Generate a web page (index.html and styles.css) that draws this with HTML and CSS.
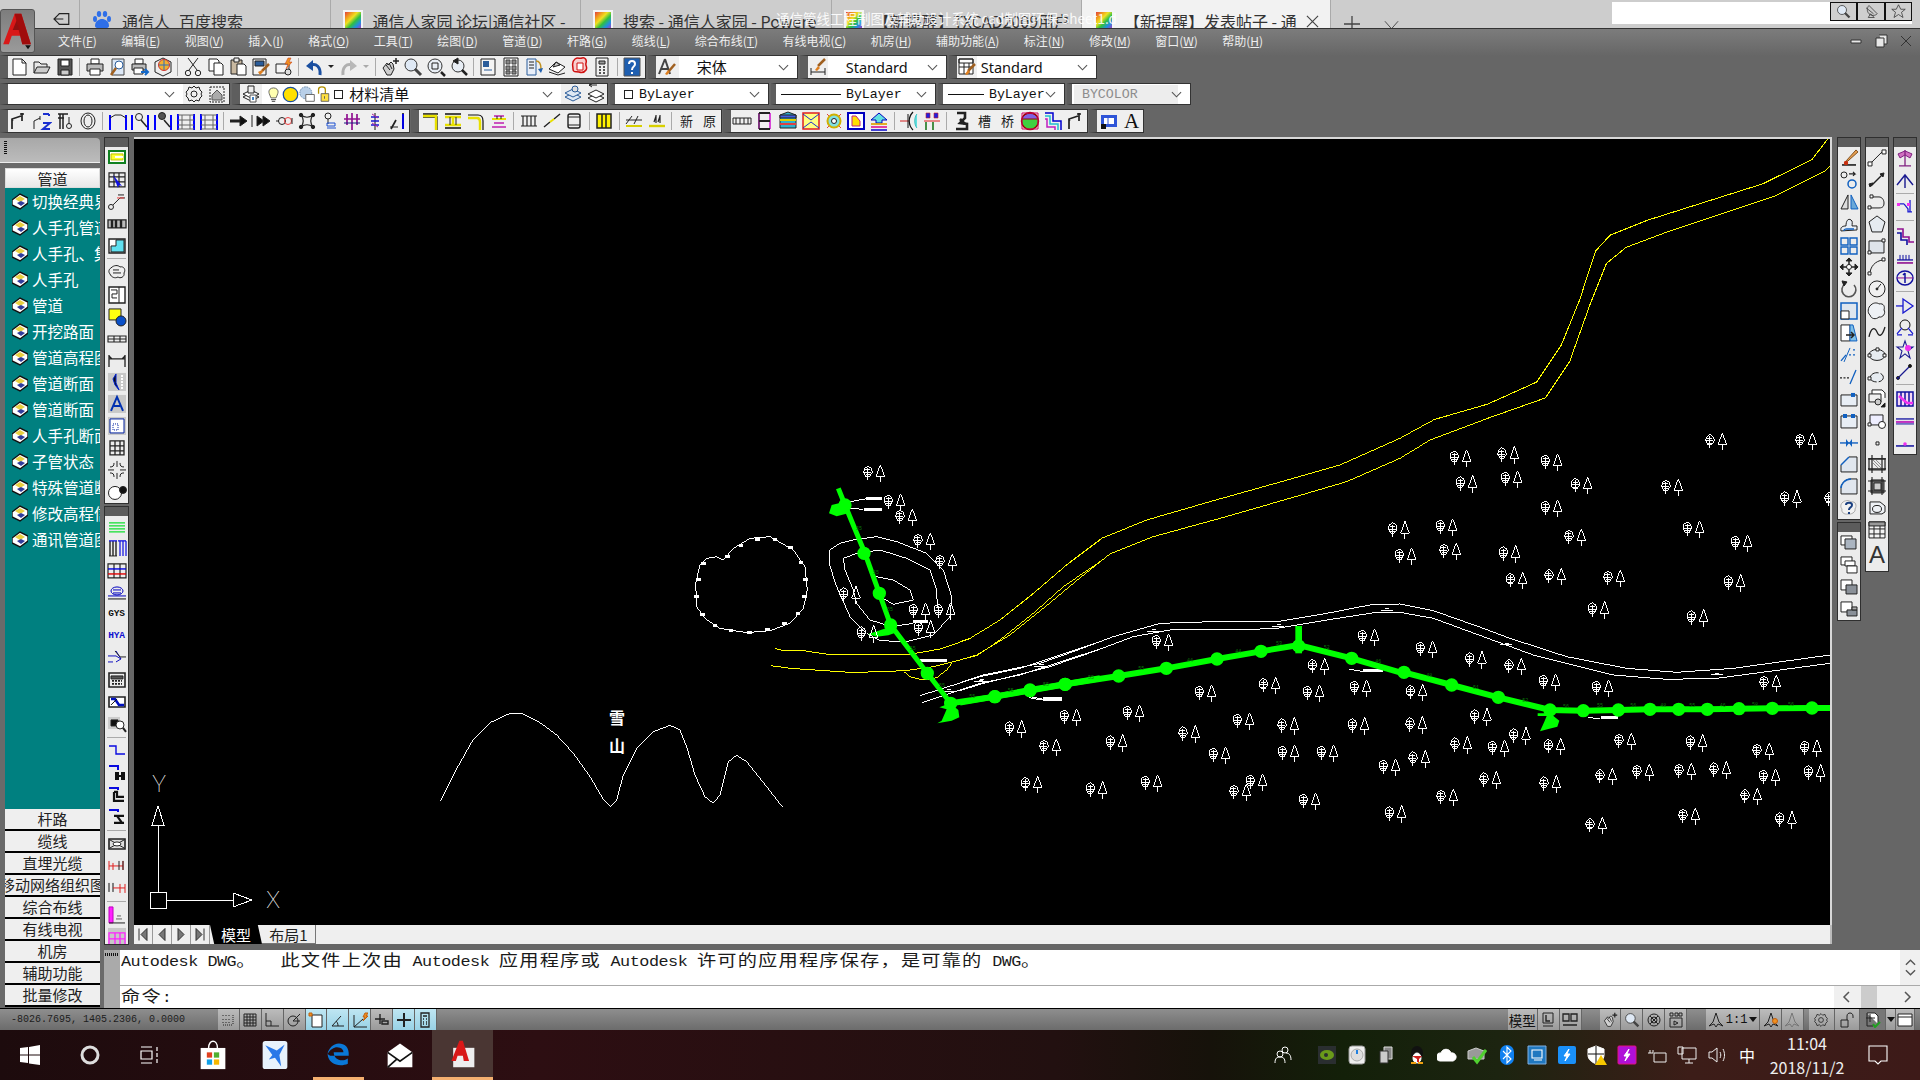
FILE: index.html
```html
<!DOCTYPE html>
<html lang="zh-CN">
<head>
<meta charset="utf-8">
<title>通信管线工程制图及辅助设计系统</title>
<link rel="stylesheet" href="styles.css">
</head>
<body>
<svg class="defs" aria-hidden="true">
<defs>
<g id="new"><path d="M4 2h9l4 4v12H4z" fill="#fff"/><path d="M13 2v4h4"/></g>
<g id="open"><path d="M2 16V5h5l2 2h6v3" fill="#e8e8e8"/><path d="M2 16l3-6h13l-3 6z" fill="#ccc"/></g>
<g id="save"><path d="M3 2h14v16H3z" fill="#555"/><path d="M6 3h8v6H6z" fill="#fff"/><path d="M6 13h8v5H6z" fill="#ccc"/></g>
<g id="print"><path d="M6 2h8v5H6z" fill="#fff"/><path d="M2 7h16v7H2z" fill="#bbb"/><path d="M5 12h10v6H5z" fill="#fff"/></g>
<g id="prev"><path d="M4 2h12v16H4z" fill="#dde8f6" stroke="#444"/><circle cx="11" cy="8" r="4" fill="#fff" stroke="#2a5c9a"/><path d="M8 11l-5 7" stroke="#a06020" stroke-width="2.5"/></g>
<g id="plot"><path d="M5 2h8v5H5z" fill="#fff"/><path d="M2 7h14v6H2z" fill="#bbb"/><path d="M4 11h9v6H4z" fill="#fff"/><path d="M11 15h6M15 12l3 3-3 3" stroke="#1468c8" stroke-width="2"/></g>
<g id="pub"><path d="M10 1l8 4v10l-8 4-8-4V5z" fill="#eee"/><circle cx="11" cy="8" r="5.5" fill="#f2b030" stroke="#c33"/><path d="M11 3v10M6 8h10" stroke="#2a6fc0"/></g>
<g id="cut"><path d="M5 1l9 12M15 1L6 13"/><circle cx="5" cy="16" r="2.7"/><circle cx="15" cy="16" r="2.7"/></g>
<g id="copy"><path d="M3 2h8l2 2v10H3z" fill="#fff"/><path d="M8 6h7l2 2v10H8z" fill="#fff"/></g>
<g id="paste"><path d="M3 3h11v14H3z" fill="#c8b8a0"/><path d="M6 1h5v4H6z" fill="#eee"/><path d="M9 7h7l2 2v9H9z" fill="#fff"/></g>
<g id="match"><path d="M2 2h13v16H2z" fill="#f4f4f4"/><path d="M4 4h9v5H4z" fill="#2a5c9a"/><path d="M18 7l-7 7" stroke="#a06020" stroke-width="2.5"/><path d="M7 15l4-2 1 2-3 3z" fill="#e08020" stroke="none"/></g>
<g id="quick"><path d="M2 7h13v9H2z" fill="#f4f4f4"/><circle cx="14" cy="15" r="3" fill="#ddd"/><path d="M14 1l-3 6h3l-2 5 6-7h-3l2-4z" fill="#f09020" stroke="#c03010" stroke-width=".5"/></g>
<g id="undo"><path d="M16 18C17 10 12 6 7 8" stroke="#1a4fa0" stroke-width="3"/><path d="M2 9l7-6v11z" fill="#1a4fa0" stroke="none"/></g>
<g id="redo"><path d="M4 18C3 10 8 6 13 8" stroke="#b0b0b0" stroke-width="3"/><path d="M18 9l-7-6v11z" fill="#b8b8b8" stroke="none"/></g>
<g id="dd"><path d="M2 8h6l-3 3z" fill="#222" stroke="none"/></g>
<g id="ddg"><path d="M2 8h6l-3 3z" fill="#aaa" stroke="none"/></g>
<g id="pan"><path d="M3 11l4-5 1 2 3-3 2 2 1 5-3 6H7z" fill="#cfcfcf"/><path d="M6 8l4 5M9 6l3 6"/><path d="M16 1v6M13 4h6" stroke-width="1.5"/></g>
<g id="zoom"><circle cx="8" cy="8" r="6" fill="#dfe9f5" stroke="#333"/><path d="M12 12l6 6" stroke-width="3" stroke="#444"/></g>
<g id="zoomw"><circle cx="9" cy="9" r="7" fill="#e8eef5" stroke="#333"/><path d="M6 6h6v6H6z"/><path d="M15 15l4 4" stroke-width="2.5"/></g>
<g id="zoomp"><circle cx="9" cy="9" r="6" fill="#e8eef5" stroke="#333"/><path d="M13 13l5 5" stroke-width="2.5"/><path d="M4 4l5-3v6z" fill="#222"/></g>
<g id="prop"><path d="M3 2h14v16H3z" fill="#f4f4f4"/><path d="M5 4h6v6H5z" fill="#2a5c9a" stroke="none"/><path d="M6 13h8" stroke="#2a5c9a"/></g>
<g id="dc"><path d="M3 1h14v18H3z" fill="#f4f4f4"/><path d="M5 3h4v4H5zM11 3h4v4h-4zM5 9h4v4H5zM11 9h4v4h-4zM5 14h4v3H5zM11 14h4v3h-4z" fill="#888" stroke="#444"/></g>
<g id="tp"><path d="M3 2h9v16H3z" fill="#e8eef8" stroke="#2a5c9a"/><path d="M5 5h5M5 8h5M5 11h5"/><path d="M12 4c4 0 5 4 5 8" stroke="#c09020" stroke-width="1.5"/><path d="M14 12l3 4 2-5z" fill="#2060b0" stroke="none"/></g>
<g id="mark"><path d="M2 12l7-7 9 5-7 6z" fill="#fff"/><path d="M2 15l9 3 7-2"/><path d="M6 10l3-5 4 3z" fill="#ccc"/></g>
<g id="sheet"><path d="M5 2c3-2 4 0 7-1s5 2 4 5 2 4 0 7-4 3-7 2-6 1-6-3-2-7 2-10z" fill="#f8d0d0" stroke="#d01010" stroke-width="1.5"/><path d="M7 6h6v7H7z" fill="#fff" stroke="#d01010"/></g>
<g id="calc"><path d="M4 1h12v18H4z" fill="#f0f0f0"/><path d="M7 4h6v3H7z" fill="#999"/><path d="M7 10h2M11 10h2M7 13h2M11 13h2M7 16h2M11 16h2" stroke-width="1.5"/></g>
<g id="help"><path d="M2 1h16v18H2z" fill="#1f5fb0" stroke="#555"/><path d="M7 7c0-4 6-4 6 0 0 3-3 2-3 6" stroke="#fff" stroke-width="2"/><path d="M10 15v2" stroke="#fff" stroke-width="2"/></g>
<g id="txs"><path d="M8 2L2 17M8 2l5 15M4 12h7" stroke="#444" stroke-width="2"/><path d="M18 7l-6 7" stroke="#a06020" stroke-width="2.5"/><path d="M8 17l3-4 2 2-3 3z" fill="#e08020" stroke="none"/></g>
<g id="dims"><path d="M3 11v7M17 11v7M3 15h14"/><path d="M17 2l-7 7" stroke="#a06020" stroke-width="2.5"/><path d="M7 13l3-4 2 2-3 3z" fill="#e08020" stroke="none"/></g>
<g id="tabs"><path d="M2 2h14v15H2z" fill="#fff"/><path d="M2 2h14v4H2zM2 10h14M7 6v11M12 6v11"/><path d="M18 7l-7 7" stroke="#a06020" stroke-width="2.5"/><path d="M8 17l3-4 2 2-3 3z" fill="#e08020" stroke="none"/></g>
<g id="gear"><circle cx="10" cy="10" r="3"/><path d="M10 2l2 2 3-1 1 3 2 2-1 2 1 2-2 2-1 3-3-1-2 2-2-2-3 1-1-3-2-2 1-2-1-2 2-2 1-3 3 1z"/></g>
<g id="gear2"><path d="M3 3h14v15H3z" stroke-dasharray="2 1"/><path d="M5 11l5-5 5 5v5H5z" fill="#aaa" stroke="#555"/></g>
<g id="lay"><path d="M2 13l8-4 8 4-8 4z" fill="#fff"/><path d="M2 10l8-4 8 4-8 4z" fill="#fff"/><path d="M7 2h6v7H7z" fill="#eee"/><path d="M9 11h6v7H9z" fill="#fff" stroke="#555"/><path d="M11 13h2v3h-2z" fill="#4080c0" stroke="none"/></g>
<g id="lay2"><path d="M2 13l8-4 8 4-8 4z" fill="#dfe9f5" stroke="#2a5c9a"/><path d="M2 9l8-4 8 4-8 4z" fill="#dfe9f5" stroke="#2a5c9a"/><circle cx="12" cy="5" r="3" fill="#ddd" stroke="#2a5c9a"/></g>
<g id="lay3"><path d="M2 14l8-4 8 4-8 4z" fill="#fff"/><path d="M2 10l8-4 8 4-8 4z" fill="#fff"/><path d="M3 1h8M3 1l3 2M3 1l3-1" stroke="#222"/></g>
<g id="bulb"><path d="M5 9c-3-9 13-9 10 0l-2 5H7z" fill="#ffffb0" stroke="#555"/><path d="M7 16h6M8 18h4"/></g>
<g id="sun"><circle cx="10" cy="10" r="8.500" fill="#ffe000" stroke="#1a4fa0" stroke-width="1.5"/></g>
<g id="frz"><circle cx="8" cy="8" r="7" fill="#b8cfe8" stroke="#6080a0" stroke-dasharray="2 1"/><path d="M8 10h10v8H8z" fill="#fff" stroke="#555"/></g>
<g id="lock"><path d="M3 9V4c0-4 8-4 8 0v5" stroke="#b09000" stroke-width="1.5"/><path d="M6 9h9v9H6z" fill="#ffe040" stroke="#555"/><path d="M10 12v3" stroke="#555"/></g>
<g id="p1"><path d="M3 18V8l9-3M13 2v8M11 3h4" stroke-width="1.7"/><path d="M3 8l1 2" /></g>
<g id="p2"><path d="M2 18V10l6-3M8 5v4"/><path d="M11 3h6M17 3v2M11 12h7l-7 6h7" stroke="#1a2fd0" stroke-width="2"/></g>
<g id="p3"><path d="M3 3h10M5 3v15M8 3v15M3 7h6" stroke-width="1.5"/><circle cx="14" cy="15" r="2.5"/><path d="M14 6v7"/></g>
<g id="p4"><ellipse cx="10" cy="10" rx="7" ry="8"/><ellipse cx="10" cy="10" rx="4" ry="6"/></g>
<g id="q1"><path d="M2 4v15M18 4v15" stroke="#0000ff" stroke-width="2"/><path d="M2 7l5-3h6l5 3"/></g>
<g id="q2"><path d="M2 4v15M18 4v15" stroke="#0000ff" stroke-width="2"/><circle cx="9" cy="6" r="3.5"/><path d="M11 9l6 7" stroke-width="1.5"/></g>
<g id="q3"><path d="M2 4v15M18 4v15" stroke="#0000ff" stroke-width="2"/><circle cx="9" cy="5" r="3.5" fill="#555"/><path d="M11 9l6 7" stroke-width="1.5"/></g>
<g id="q4"><path d="M2 3v16M18 3v16" stroke="#0000ff" stroke-width="2"/><path d="M2 4h16M2 9h16M2 14h16M2 18h16M6 4v14M14 4v14" stroke="#666"/></g>
<g id="a1"><path d="M2 10h12" stroke-width="3"/><path d="M12 5l7 5-7 5z" fill="#111"/></g>
<g id="a2"><path d="M1 4v12M6 5l7 5-7 5zM12 5l7 5-7 5z" fill="#111" stroke-width="1"/></g>
<g id="a3"><path d="M2 10h3"/><circle cx="8" cy="10" r="3.5"/><circle cx="14" cy="10" r="3.5" stroke="#f04040"/><path d="M18 7v6"/></g>
<g id="a4"><path d="M4 4c4 3 8 3 12 0M4 16c4-3 8-3 12 0M4 4c3 4 3 8 0 12M16 4c-3 4-3 8 0 12" stroke-width="1.2"/><circle cx="4" cy="4" r="1.7" fill="#222"/><circle cx="16" cy="4" r="1.7" fill="#222"/><circle cx="4" cy="16" r="1.7" fill="#222"/><circle cx="16" cy="16" r="1.7" fill="#222"/></g>
<g id="a5"><circle cx="8" cy="5" r="3"/><path d="M8 8v5" /><path d="M7 12h8v3H7zM7 17h9" stroke="#1a4fd0"/></g>
<g id="a6"><path d="M10 2v17M5 3v11M15 3v11M2 8h16" stroke="#901090" stroke-width="1.7"/><path d="M2 12h16" stroke="#1a1a80"/></g>
<g id="a7"><path d="M10 2v17" stroke="#111"/><path d="M6 6h8M6 10h8M6 14h8" stroke="#1a1ad0" stroke-width="1.5"/><path d="M7 3l6 4M7 12l6 4" stroke="#b020a0"/></g>
<g id="a8"><path d="M3 18L8 9M15 2v8M15 8v10" stroke-width="1.7"/><path d="M15 3v15" stroke="#0000e0" stroke-width="2"/><path d="M2 16h8"/></g>
<g id="y1"><path d="M2 6h14v13M2 3h15" stroke="#111" stroke-width="1.3"/><path d="M2 5h13v14" stroke="#e8e000" stroke-width="2.4"/></g>
<g id="y2"><path d="M2 3h16M2 17h16" stroke="#111" stroke-width="1.3"/><path d="M2 6h16M2 14h16M10 6v8" stroke="#e8e000" stroke-width="2.4"/><path d="M7 6v8M13 6v8"/></g>
<g id="y3"><path d="M2 4h10c5 0 5 4 5 6v9" stroke="#111" stroke-width="1.2"/><path d="M2 7h9c3 0 3 2 3 4v8" stroke="#e8e000" stroke-width="2.4"/></g>
<g id="y4"><path d="M5 5h10M5 12h10M3 16h14" stroke="#c020b0" stroke-width="1.5"/><path d="M3 8h14" stroke="#e8e000" stroke-width="2"/><path d="M8 5v3M12 5v3"/></g>
<g id="w1"><path d="M2 5h16M2 15h16M4 5v10M8 5v10M12 5v10M16 5v10" stroke-width="1.2"/></g>
<g id="w2"><path d="M2 16l6-5M12 8l6-5" stroke-width="1.4"/><path d="M8 11l4-3" stroke="#e8e000" stroke-width="2"/></g>
<g id="w3"><rect x="4" y="3" width="12" height="14" rx="2" stroke-width="1.4"/><path d="M4 6h12M4 14h12"/></g>
<g id="w4"><path d="M3 3h14v14H3z" fill="#fff200" stroke-width="1.5"/><path d="M8 3v14M12 3v14" stroke-width="1.5"/></g>
<g id="w5"><path d="M2 13l6-8M2 9h16M14 5l-4 8" stroke="#222"/><path d="M2 15h16" stroke="#d8d000" stroke-width="2"/></g>
<g id="w6"><path d="M2 15h16" stroke="#d8d000" stroke-width="2.4"/><path d="M9 4v8M13 4v8M7 11l2-6M11 11l2-6" stroke-width="1.2"/></g>
<g id="c1"><path d="M1 7h18v6H1z"/><path d="M4 7v6M8 7v6M12 7v6M16 7v6" /></g>
<g id="c2"><path d="M4 2v16M15 2v16" stroke="#d010d0" stroke-width="1.5"/><path d="M4 2h11M4 10h11M4 18h11" stroke-width="1.8"/><path d="M4 2v16"/></g>
<g id="c3"><path d="M2 4l8-3 8 3v13H2z" fill="#30b0d0"/><path d="M2 4h16v3H2z" fill="#4060e0"/><path d="M2 9h16" stroke="#e0d000" stroke-width="2"/><path d="M2 13h16" stroke="#e04040" stroke-width="2"/></g>
<g id="c4"><path d="M2 2h16v16H2z" fill="#ffff80" stroke="#e02020" stroke-width="1.5"/><path d="M2 3l8 6 8-6M2 17l8-6 8 6" stroke="#2030d0"/></g>
<g id="c5"><path d="M3 3l14 14M17 3L3 17" stroke="#e04040"/><circle cx="10" cy="10" r="6.5" fill="#80e0e0" stroke="#d0b000" stroke-width="2"/><circle cx="10" cy="10" r="2.5" fill="#fff"/></g>
<g id="c6"><path d="M2 2h16v16H2z" fill="#fff" stroke="#0000c0" stroke-width="2"/><path d="M6 5h4l4 5v5H6z" fill="#ffe000" stroke="#c02080"/></g>
<g id="c7"><path d="M2 9l8-7 8 7h-5v3H7V9z" fill="#60e0e0" stroke="#0000c0"/><path d="M2 13h16" stroke="#e0a000" stroke-width="1.7"/><path d="M2 16h16" stroke="#e02090" stroke-width="1.7"/><path d="M2 19h16" stroke="#2020d0" stroke-width="1.7"/></g>
<g id="c8"><path d="M1 10h9" stroke="#d02020"/><path d="M14 1C9 6 9 14 14 19" stroke="#111" stroke-width="1.2"/><path d="M18 3C15 6 15 14 18 17" fill="#60e0e0" stroke="#40c0c0"/><path d="M9 3v14" stroke="#111"/></g>
<g id="c9"><path d="M2 10h16" stroke="#e02020"/><path d="M4 11v8M11 11v8" stroke="#107010" stroke-width="1.5"/><path d="M4 2h4v5H4zM12 2h4v5h-4z" fill="#2020e0" stroke="#d02020" stroke-width=".6"/></g>
<g id="d1"><path d="M5 2h8v5l-5 5 7 1v5H4" stroke-width="2.6"/><path d="M8 8l5 5" stroke-width="2.6"/></g>
<g id="d2"><ellipse cx="10" cy="10" rx="8.5" ry="8.5" fill="#40d040" stroke="#a00000" stroke-width="1.5"/><path d="M2 8a8.5 8.5 0 0 1 16 0z" fill="#8060e0" stroke="#a00000"/><path d="M2 2h16v16H2z" stroke="#d00060"/></g>
<g id="d3"><path d="M2 2h8v8h8v9" stroke="#0000d0" stroke-width="1.5"/><path d="M2 5h5v8h8v6" stroke="#20c0d0" stroke-width="1.5"/><path d="M2 8h2v8h8v3" stroke="#c020c0" stroke-width="1.5"/></g>
<g id="d4"><path d="M2 4h16v12H2z" fill="#2f55d8" stroke="none"/><path d="M5 7h10v6H5z" fill="#fff" stroke="none"/><path d="M9 7v6" stroke="#2f55d8"/><path d="M2 13h5v5H2z" fill="#111" stroke="none"/></g>
<g id="bk"><path d="M0 8l8-6 8 4v5l-8 6-8-4z" fill="#fff" stroke="#111" stroke-width="1.4"/><path d="M3 7l5-3 5 3-5 3z" fill="#e8d040" stroke="none"/><path d="M5 11l4-2 4 2-4 3z" fill="#303c9c" stroke="none"/></g>
<g id="v1"><path d="M2 3h16v12H2z" fill="#fff" stroke="#108020" stroke-width="2"/><path d="M4 6h12v6H4z" fill="#ffff30" stroke="#c0c000"/><path d="M8 9h8" stroke="#fff" stroke-width="2"/></g>
<g id="v2"><path d="M2 3h16v14H2zM2 7h16M2 12h16M7 3v14M12 3v14" stroke-width="1.2"/><path d="M6 5l9 11-3-1-1 3z" fill="#1010e0" stroke="none"/></g>
<g id="v3"><circle cx="4" cy="15" r="2.5"/><path d="M6 13l7-7h5" /><path d="M10 6h7" stroke="#f04040"/><path d="M11 3h6"/></g>
<g id="v4"><path d="M1 6h18v8H1z" fill="#bbb" stroke-width="1.3"/><path d="M5 6v8M9 6v8M14 6v8" stroke-width="2.4"/></g>
<g id="v5"><path d="M2 3h16v14H2z" fill="#fff" stroke-width="1.4"/><path d="M9 4h8v12H4v-6h5z" fill="#60e0f0"/></g>
<g id="v6"><path d="M4 5c3-3 7-3 9-1 4-1 6 3 4 6 1 4-4 6-6 4-3 2-7 0-8-3-2-2-1-5 1-6z" fill="#eee"/><path d="M6 7h6M6 10h8"/></g>
<g id="v7"><path d="M2 2h16v16H2z" fill="#fff" stroke-width="1.4"/><path d="M12 2v16M4 5h6v4H5v4h5" /></g>
<g id="v8"><path d="M2 2h12v11H2z" fill="#ffff10"/><circle cx="14" cy="14" r="5" fill="#0a50c8"/></g>
<g id="v9"><path d="M1 7h18v6H1zM7 7v6M13 7v6M1 10h18" stroke-width="1.1"/></g>
<g id="v10"><path d="M2 4v12M18 4v12M2 8h16M2 5l3 3M18 5l-3 3" stroke-width="1.3"/></g>
<g id="v11"><path d="M1 1h18v18H1z" fill="#c8c8c8" stroke="none"/><path d="M9 2v9l3 7-4-5-2-6z" fill="#111" stroke="#0020d0"/><path d="M15 3v14" stroke="#fff" stroke-dasharray="2 1" stroke-width="2"/></g>
<g id="v12"><path d="M1 1h18v18H1z" fill="#c8c8c8" stroke="none"/><path d="M4 17l6-14 6 14M7 12h6" stroke="#0030b0" stroke-width="2"/></g>
<g id="v13"><path d="M1 1h18v18H1z" fill="#c8c8c8" stroke="none"/><path d="M3 3h14v14H3z" fill="#fff" stroke="#0020a0"/><path d="M6 8h5v6H6z" stroke="#0020a0" stroke-dasharray="1 1"/></g>
<g id="v14"><path d="M3 3h14v14H3zM3 8h14M3 13h14M8 3v14M13 3v14" stroke-width="1.3"/></g>
<g id="v15"><path d="M10 1v6M10 13v6M1 10h6M13 10h6M7 3c0 3-1 4-4 4M13 3c0 3 1 4 4 4M7 17c0-3-1-4-4-4M13 17c0-3 1-4 4-4"/></g>
<g id="v16"><circle cx="8" cy="11" r="6.5" fill="#fff"/><circle cx="16" cy="8" r="3.5" fill="#111"/></g>
<g id="u1"><path d="M2 6h16M2 9h16M2 12h16M2 15h16" stroke="#10e030" stroke-width="1.3"/></g>
<g id="u2"><path d="M3 2v15M6 2v15M9 2v15" stroke="#111" stroke-width="1.3"/><path d="M2 2h8M11 2h8M13 2v15M16 2v15M19 2v15" stroke="#0a0ae0" stroke-width="1.2"/><path d="M2 17h8"/></g>
<g id="u3"><path d="M1 3h18v14H1zM7 3v14M13 3v14" stroke-width="1.2"/><path d="M1 8h18" stroke="#0000e0" stroke-width="1.4"/><path d="M1 13h18" stroke="#e00000" stroke-width="1.4"/></g>
<g id="u4"><ellipse cx="10" cy="9" rx="6" ry="4" stroke="#0000c0"/><path d="M6 8h8M6 11h8M1 14h18" stroke="#0000c0"/><path d="M1 17h18" stroke="#111"/></g>
<g id="u7"><path d="M1 8h8l5 3-5 3M9 3l5 8M1 14h5" stroke="#1010c0"/><path d="M8 3l5 6h6"/></g>
<g id="u8"><path d="M2 3h16v14H2z" stroke-width="1.6"/><path d="M4 6h12v3H4z" fill="#555"/><path d="M5 11h10M5 14h10" stroke-dasharray="2 1" stroke-width="1.7"/></g>
<g id="u9"><path d="M2 5h16v10H2z" fill="#fff" stroke-width="1.6"/><path d="M4 7h4l4 6h5" stroke="#0010c0" stroke-width="2.6"/><path d="M4 13l6-6" stroke="#111"/></g>
<g id="u10"><path d="M1 3h12v12H1z" fill="#ccc" stroke="none"/><path d="M4 6h7v6H4z" fill="#111"/><circle cx="13" cy="11" r="4" fill="#fff"/><path d="M16 14l3 4" stroke-width="2"/></g>
<g id="u11"><path d="M2 5h7v8h9" stroke="#0a0ae0" stroke-width="1.4"/></g>
<g id="u12"><path d="M2 3h9v4" stroke="#0a0ae0" stroke-width="2"/><path d="M9 10h2v6H9zM15 10h2v6h-2zM9 13h8" stroke="#111" stroke-width="2"/></g>
<g id="u13"><path d="M2 3h9v2" stroke="#0a0ae0" stroke-width="2"/><path d="M7 7v9h10M7 7h3v5h7" stroke="#111" stroke-width="2.2"/></g>
<g id="u14"><path d="M2 3h9v2" stroke="#0a0ae0" stroke-width="2"/><path d="M7 9h10M7 16h10M10 9l5 7" stroke="#111" stroke-width="2.2"/></g>
<g id="u15"><path d="M2 5h16v10H2z" fill="#ddd" stroke-width="1.6"/><path d="M3 6l14 8M17 6L3 14"/><ellipse cx="10" cy="10" rx="4" ry="2" fill="#fff"/></g>
<g id="u16"><path d="M2 5v9M6 7v7M16 5v9M2 10h14" stroke="#e02020"/><path d="M12 5v9M16 5v9"/></g>
<g id="u17"><path d="M2 5v9M6 5v9" stroke="#111"/><path d="M6 10h12M13 6v9M18 6v9" stroke="#e02020"/></g>
<g id="u18"><path d="M2 2h4v16H2z" fill="#ff20ff" stroke="#c000c0"/><path d="M2 18h16"/><path d="M9 14h6M10 11h4" stroke="#666"/></g>
<g id="u19"><path d="M1 1h18v18H1z" fill="#c8c8c8" stroke="none"/><path d="M2 6h16v12H2zM2 12h16M8 6v12M13 6v12" stroke="#ff20ff" stroke-width="1.3"/></g>
<g id="rA1"><path d="M3 17h14" stroke="#111" stroke-width="1.5"/><path d="M17 2L8 12l-1 2 2-1 10-9z" fill="#e8a050" stroke="#805020"/><circle cx="7" cy="15" r="2.2" fill="#c83010" stroke="none"/></g>
<g id="rA2"><circle cx="5" cy="5" r="3"/><circle cx="13" cy="14" r="4" stroke="#1060c0" stroke-width="1.5"/><path d="M10 4h6l-2-2M16 4l-2 2" stroke-width="1.2"/></g>
<g id="rA3"><path d="M9 3L2 17h7z" fill="#ddd"/><path d="M12 3l7 14h-7z" fill="#6aa8d8" stroke="#1060c0"/></g>
<g id="rA4"><path d="M2 17c-1-4 2-5 5-5 0-5 2-8 5-6 2 1 1 4 1 6h5v4z" fill="#e8eef5"/><path d="M5 17c0-2 1-2 3-2h7" stroke="#1060c0" stroke-width="1.4"/></g>
<g id="rA5"><path d="M2 2h7v7H2zM11 2h7v7h-7zM2 11h7v7H2zM11 11h7v7h-7z" stroke="#1060c0" stroke-width="1.4"/></g>
<g id="rA6"><path d="M10 1v18M1 10h18" stroke-width="1.5"/><path d="M7 4l3-3 3 3zM7 16l3 3 3-3zM4 7l-3 3 3 3zM16 7l3 3-3 3z" fill="#222"/><circle cx="10" cy="10" r="2.5" fill="#fff"/></g>
<g id="rA7"><path d="M15 6a7 7 0 1 1-9-1" stroke="#555" stroke-width="1.6"/><path d="M3 2l5 1-3 4z" fill="#222"/></g>
<g id="rA8"><path d="M2 2h16v16H2z" fill="#dfe6ee" stroke="#1060c0" stroke-width="1.5"/><path d="M2 10h8v8H2z" fill="#fff" stroke="#222"/></g>
<g id="rA9"><path d="M2 2h9v16H2z" fill="#fff"/><path d="M11 2h3l4 16h-7z" fill="#80c0e8" stroke="#1060c0"/><path d="M7 12h8M12 9l3 3-3 3" stroke-width="1.5"/></g>
<g id="rA10"><path d="M2 16l5-6" stroke="#1060c0" stroke-width="1.3"/><path d="M10 10h8M14 5h4" stroke="#1060c0" stroke-dasharray="2 2" stroke-width="1.3"/><path d="M11 3l-6 14" stroke="#1060c0"/></g>
<g id="rA11"><path d="M1 11h9" stroke="#222" stroke-dasharray="2 1.5" stroke-width="1.3"/><path d="M17 3l-6 14" stroke="#1060c0" stroke-width="1.3"/></g>
<g id="rA12"><path d="M2 6h16v11H2z" fill="#e8eef5"/><path d="M12 4h4v4h-4z" fill="#1060c0" stroke="none"/></g>
<g id="rA13"><path d="M2 5h16v12H2z" fill="#e8eef5"/><path d="M4 3h4v4H4zM12 3h4v4h-4z" fill="#1060c0" stroke="none"/></g>
<g id="rA14"><path d="M1 10h18" stroke="#1060c0" stroke-width="1.4"/><path d="M7 6l3 4-3 4zM13 6l-3 4 3 4z" fill="#1060c0" stroke="none"/></g>
<g id="rA15"><path d="M2 18V11L10 3h8v15z" fill="#e0e6ee"/><path d="M2 11L10 3" stroke="#1060c0" stroke-width="1.5"/></g>
<g id="rA16"><path d="M2 18v-6C2 8 6 3 12 3h6v15z" fill="#e0e6ee"/><path d="M2 12C2 8 6 3 12 3" stroke="#1060c0" stroke-width="1.5"/></g>
<g id="rA17"><path d="M3 5c3-3 7-3 9-1 5-1 6 4 4 7 1 3-4 6-7 5-4 1-7-2-6-5-2-2-1-5 0-6z" fill="#f2f2f2" stroke="#aaa"/><path d="M7 7c0-3 6-3 6 0 0 3-3 2-3 5" stroke="#1a3f80" stroke-width="2"/><path d="M10 14v2" stroke="#1a3f80" stroke-width="2"/></g>
<g id="st1"><path d="M2 3h11v9H2z" fill="#fff"/><path d="M6 6h11v10H6z" fill="#aab4c0"/></g>
<g id="st2"><path d="M2 2h11v8H2z" fill="#fff"/><path d="M6 6h10v5H6z" fill="#fff"/><path d="M8 11h10v7H8z" fill="#fff"/></g>
<g id="st3"><path d="M2 3h11v10H2z" fill="#fff"/><path d="M7 8h11v9H7z" fill="#8a9098"/></g>
<g id="st4"><path d="M2 3h11v10H2z" fill="#fff"/><path d="M8 11h10v6H8z" fill="#8a9098"/><path d="M13 8h5v3h-5z" fill="#aaa"/></g>
<g id="b1"><path d="M3 16L16 3"/><path d="M1 14h4v4H1zM15 2h4v4h-4z" fill="#fff" stroke="#222"/></g>
<g id="b2"><path d="M4 16L16 4" stroke-width="1.4"/><path d="M2 14l4-1-3 4zM17 3l-1 4-3-3z" fill="#222"/></g>
<g id="b3"><path d="M3 16h9c4 0 5-2 5-5s-2-6-5-6H5"/><path d="M1 14h3v3H1zM3 3h3v3H3z" fill="#fff"/></g>
<g id="b4"><path d="M10 2l8 6-3 10H5L2 8z" fill="#e6ebf0"/></g>
<g id="b5"><path d="M2 5h15v12H2z" fill="#dfe4ea"/><path d="M1 15h3v3H1zM15 3h3v3h-3z" fill="#fff"/></g>
<g id="b6"><path d="M3 17c0-7 5-13 13-14"/><path d="M1 15h3v3H1zM15 1h3v3h-3z" fill="#fff"/></g>
<g id="b7"><circle cx="10" cy="10" r="8" fill="#f0f0f0"/><path d="M10 10l4-5"/><circle cx="10" cy="10" r="1" fill="#222"/></g>
<g id="b8"><path d="M4 4c3-3 7-2 8-1 5-1 6 3 5 6 2 3-1 8-5 7-3 3-8 2-9-2-3-2-2-8 1-10z" fill="#eef1f5"/></g>
<g id="b9"><path d="M2 14c2-10 6-10 8-5s5 5 8-5" stroke-width="1.3"/></g>
<g id="b10"><ellipse cx="10" cy="10" rx="8" ry="5.5" fill="#e6ebf0"/><path d="M1 9h3v3H1zM16 9h3v3h-3zM9 3h3v3H9z" fill="#fff"/></g>
<g id="b11"><path d="M3 12c0-5 5-7 9-6s5 4 4 6c-2 4-10 4-13 0z" fill="#e6ebf0" stroke-dasharray="12 2"/><path d="M1 10h3v3H1z" fill="#fff"/></g>
<g id="b12"><path d="M5 7V1h10l3 3v5" fill="#fff"/><path d="M2 5h12v8H2z" fill="#eee"/><circle cx="11" cy="13" r="3" fill="#ccc"/><path d="M14 18l4-4v4z" fill="#111"/></g>
<g id="b13"><path d="M3 4h13v10H3z" fill="#eef"/><circle cx="15" cy="14" r="3.5" fill="#fff"/><path d="M1 12h3v3H1z" fill="#fff"/></g>
<g id="b14"><path d="M9 9h3v3H9z"/></g>
<g id="b15"><path d="M2 5h16v11H2z" stroke-width="1.2"/><path d="M5 1v18M15 1v18M1 5h18M1 15h18" stroke-width="1.2"/><path d="M6 6l8 8M9 6l5 5M6 9l5 5" stroke="#888"/></g>
<g id="b16"><path d="M4 4h13v13H4z" fill="#777"/><path d="M7 7h7v7H7z" fill="#ccc"/><path d="M1 5h18M1 15h18M5 1v18M15 1v18" stroke-width="1.1"/></g>
<g id="b17"><path d="M3 4h10l5 4v6l-3 2H3z" fill="#eef1f5"/><ellipse cx="10" cy="11" rx="4.5" ry="3.5"/></g>
<g id="b18"><path d="M2 2h16v16H2z" fill="#f4f4f4"/><path d="M2 2h16v4H2z" fill="#999"/><path d="M2 9h16M2 14h16M7 6v12M13 6v12"/></g>
<g id="c_1"><path d="M10 3L3 6l2 4 5-3 5 3 2-4z" fill="#d070c0" stroke="#802080"/><path d="M10 2v16M4 18h12" stroke="#802080" stroke-width="1.3"/></g>
<g id="c_2"><path d="M2 15L10 5l8 10M10 5v13" stroke="#1a1a90" stroke-width="1.4"/></g>
<g id="c_3"><path d="M3 7h6M9 7l4 5v3h4M15 3v12" stroke="#1a1ad0" stroke-width="1.3"/><path d="M2 6h3v3H2zM12 6h3v3h-3z" fill="#f030f0" stroke="none"/></g>
<g id="c_4"><path d="M2 4h6v8h6v5h5" stroke="#901090" stroke-width="1.6"/><path d="M2 8h4v7h6v5" stroke="#1010a0" stroke-width="1.6"/></g>
<g id="c_5"><path d="M2 13h16" stroke="#1010a0" stroke-width="1.3"/><path d="M2 16h16" stroke="#901090" stroke-width="1.6"/><path d="M5 8v5M8 8v5M11 8v5M14 8v5" stroke="#1010a0"/></g>
<g id="c_6"><ellipse cx="10" cy="10" rx="8" ry="7" stroke="#1010a0" stroke-width="1.4"/><path d="M2 10h16" stroke="#901090"/><path d="M10 5v10M8 7l2-2" stroke="#1010a0" stroke-width="1.5"/></g>
<g id="c_7"><path d="M1 10h7" stroke="#1a1ad0" stroke-width="1.3"/><path d="M8 3l10 7-10 7z" stroke="#1a1ad0" stroke-width="1.3"/></g>
<g id="c_8"><circle cx="10" cy="7" r="5" stroke="#111"/><path d="M2 16l5-6M18 16l-5-6M2 17h5M13 17h5" stroke="#1a1ad0" stroke-width="1.3"/></g>
<g id="c_9"><path d="M10 1l2 6h6l-5 4 2 7-5-4-5 4 2-7-5-4h6z" stroke="#1a1a90" stroke-width="1.1"/><circle cx="13" cy="8" r="3" fill="#f030f0" stroke="none"/></g>
<g id="c_10"><path d="M3 16L15 4" stroke="#1a1a90" stroke-width="1.3"/><circle cx="15" cy="4" r="1.5" fill="#111"/><circle cx="3" cy="16" r="1.5" fill="#1010a0"/></g>
<g id="c_11"><path d="M2 3h16v14H2z" fill="#f4d8f4" stroke="#1010a0" stroke-width="1.5"/><path d="M6 3v14M10 3v14M14 3v14" stroke="#1010a0" stroke-width="1.5"/><path d="M4 7l8 7h6" stroke="#f030f0" stroke-width="2.5"/></g>
<g id="c_12"><path d="M1 8h18" stroke="#1010a0" stroke-width="1.3"/><path d="M1 11h18" stroke="#c030c0" stroke-width="2"/><path d="M1 13h18" stroke="#1010a0"/></g>
<g id="c_13"><path d="M1 13h18" stroke="#1010a0" stroke-width="1.5"/><circle cx="10" cy="11" r="1.8" fill="#f030f0" stroke="none"/></g>
<g id="chev"><path d="M1 1l5 5 5-5" fill="none" stroke="#555" stroke-width="1.2"/></g>
<g id="tr"><path d="M0-20l10 7 3 12-8 13H-6L-13-1l3-12z"/><path d="M0-14V22M-8-8H7M-11 0H10M-7 7H7"/><path d="M37-24L50 12H24zM37 12V28"/></g>
<g id="ra"><path d="M-18 4H18M-4 0H8" /></g>
</defs>
</svg>

<div class="screen">
  <header class="tabstrip">
    <div class="back"><svg class="backi" viewBox="0 0 22 18"><path d="M9 2L2 9l7 7M2 9h12M8 2h13v14H8"/></svg></div>
    <div class="tab"><svg class="fav" viewBox="0 0 20 20"><ellipse cx="7" cy="4" rx="2.2" ry="3" class="bl"/><ellipse cx="13" cy="4" rx="2.2" ry="3" class="bl"/><ellipse cx="3" cy="9" rx="2" ry="3" class="bl"/><ellipse cx="17" cy="9" rx="2" ry="3" class="bl"/><path d="M3 16c0-5 4-7 7-7s7 2 7 7c0 4-14 4-14 0z" class="bl"/></svg><span>通信人_百度搜索</span></div>
    <div class="tab"><i class="rb"></i><span>通信人家园 论坛|通信社区 -</span></div>
    <div class="tab"><i class="rb"></i><span>搜索 - 通信人家园 - Powere</span></div>
    <div class="tab"><i class="rb"></i><span>【新提醒】TXCAD2009用户</span></div>
    <div class="tab on"><i class="rb"></i><span>【新提醒】发表帖子 - 通</span><svg class="tx" viewBox="0 0 14 14"><path d="M1 1l12 12M13 1L1 13"/></svg></div>
    <svg class="plus" viewBox="0 0 16 16"><path d="M0 8h16M8 0v16"/></svg>
    <svg class="vee" viewBox="0 0 16 10"><path d="M1 1l7 8 7-8"/></svg>
    <div class="spring"></div>
    <div class="sbox">
      <div class="sbtn"><svg class="tiny" viewBox="0 0 20 20"><use href="#zoom"/></svg></div>
      <div class="sbtn"><svg class="tiny" viewBox="0 0 20 20"><path d="M4 5l10 8M8 2c-3 3-3 8 0 11s8 3 11 0z" fill="#ccc"/><path d="M10 13l-3 5h8z"/></svg></div>
      <div class="sbtn"><svg class="tiny" viewBox="0 0 20 20"><path d="M10 1l3 6h6l-5 4 2 7-6-4-6 4 2-7-5-4h6z"/></svg></div>
    </div>
  </header>
  <div class="apptitle">通信管线工程制图及辅助设计系统 cad制图环保 Sheet1.dwg</div>

  <div class="cad">
    <div class="logo"><svg viewBox="0 0 34 44"><path d="M2 36L14 4h7l10 32H22l-2-9h-9l-3 9z" class="lg1"/><path d="M14 4h7l10 32H22z" class="lg2"/><path d="M12 21h7l-3-10z" class="lg3"/><path d="M25 37h6l-3 4z" class="lg4"/></svg></div>
    <nav class="menubar">
      <span>文件(<u>F</u>)</span><span>编辑(<u>E</u>)</span><span>视图(<u>V</u>)</span><span>插入(<u>I</u>)</span><span>格式(<u>O</u>)</span><span>工具(<u>T</u>)</span><span>绘图(<u>D</u>)</span><span>管道(<u>D</u>)</span><span>杆路(<u>G</u>)</span><span>缆线(<u>L</u>)</span><span>综合布线(<u>T</u>)</span><span>有线电视(<u>C</u>)</span><span>机房(<u>H</u>)</span><span>辅助功能(<u>A</u>)</span><span>标注(<u>N</u>)</span><span>修改(<u>M</u>)</span><span>窗口(<u>W</u>)</span><span>帮助(<u>H</u>)</span>
      <div class="winbtns">
        <svg viewBox="0 0 14 14"><path d="M2 6h10v3H2z"/></svg>
        <svg viewBox="0 0 14 14"><path d="M5 1h8v9h-3M2 4h8v9H2z"/></svg>
        <svg viewBox="0 0 14 14"><path d="M2 2l10 10M12 2L2 12"/></svg>
      </div>
    </nav>

    <div class="row r1">
      <div class="tb t1">
        <svg class="i" viewBox="0 0 20 20"><use href="#new"/></svg><svg class="i" viewBox="0 0 20 20"><use href="#open"/></svg><svg class="i" viewBox="0 0 20 20"><use href="#save"/></svg><s></s>
        <svg class="i" viewBox="0 0 20 20"><use href="#print"/></svg><svg class="i" viewBox="0 0 20 20"><use href="#prev"/></svg><svg class="i" viewBox="0 0 20 20"><use href="#plot"/></svg><svg class="i" viewBox="0 0 20 20"><use href="#pub"/></svg><s></s>
        <svg class="i" viewBox="0 0 20 20"><use href="#cut"/></svg><svg class="i" viewBox="0 0 20 20"><use href="#copy"/></svg><svg class="i" viewBox="0 0 20 20"><use href="#paste"/></svg><svg class="i" viewBox="0 0 20 20"><use href="#match"/></svg><svg class="i" viewBox="0 0 20 20"><use href="#quick"/></svg><s></s>
        <svg class="i" viewBox="0 0 20 20"><use href="#undo"/></svg><svg class="n" viewBox="0 0 10 20"><use href="#dd"/></svg><svg class="i" viewBox="0 0 20 20"><use href="#redo"/></svg><svg class="n" viewBox="0 0 10 20"><use href="#ddg"/></svg><s></s>
        <svg class="i" viewBox="0 0 20 20"><use href="#pan"/></svg><svg class="i" viewBox="0 0 20 20"><use href="#zoom"/></svg><svg class="i" viewBox="0 0 20 20"><use href="#zoomw"/></svg><svg class="i" viewBox="0 0 20 20"><use href="#zoomp"/></svg><s></s>
        <svg class="i" viewBox="0 0 20 20"><use href="#prop"/></svg><svg class="i" viewBox="0 0 20 20"><use href="#dc"/></svg><svg class="i" viewBox="0 0 20 20"><use href="#tp"/></svg><svg class="i" viewBox="0 0 20 20"><use href="#mark"/></svg><svg class="i" viewBox="0 0 20 20"><use href="#sheet"/></svg><svg class="i" viewBox="0 0 20 20"><use href="#calc"/></svg><s></s>
        <svg class="i" viewBox="0 0 20 20"><use href="#help"/></svg>
      </div>
      <div class="tb t2">
        <svg class="i" viewBox="0 0 20 20"><use href="#txs"/></svg>
        <div class="combo c118 pl18"><span class="cjk">宋体</span><svg class="ch" viewBox="0 0 12 7"><use href="#chev"/></svg></div>
      </div>
      <div class="tb t2">
        <svg class="i nm" viewBox="0 0 20 20"><use href="#dims"/></svg>
        <div class="combo c118 pl18"><span class="std">Standard</span><svg class="ch" viewBox="0 0 12 7"><use href="#chev"/></svg></div>
      </div>
      <div class="tb t2">
        <svg class="i nm" viewBox="0 0 20 20"><use href="#tabs"/></svg>
        <div class="combo c119 pl4"><span class="std">Standard</span><svg class="ch" viewBox="0 0 12 7"><use href="#chev"/></svg></div>
      </div>
    </div>

    <div class="row r2">
      <div class="tb w1">
        <div class="combo c175"><svg class="ch" viewBox="0 0 12 7"><use href="#chev"/></svg></div>
        <svg class="i" viewBox="0 0 20 20"><use href="#gear"/></svg><svg class="i" viewBox="0 0 20 20"><use href="#gear2"/></svg>
      </div>
      <div class="tb w2">
        <svg class="i" viewBox="0 0 20 20"><use href="#lay"/></svg>
        <div class="combo c299">
          <svg class="li" viewBox="0 0 20 20"><use href="#bulb"/></svg><svg class="li" viewBox="0 0 20 20"><use href="#sun"/></svg><svg class="li" viewBox="0 0 20 20"><use href="#frz"/></svg><svg class="li" viewBox="0 0 20 20"><use href="#lock"/></svg><i class="sq"></i><span class="cjk">材料清单</span><svg class="ch" viewBox="0 0 12 7"><use href="#chev"/></svg>
        </div>
        <svg class="i" viewBox="0 0 20 20"><use href="#lay2"/></svg><svg class="i" viewBox="0 0 20 20"><use href="#lay3"/></svg>
      </div>
      <div class="tb w3"><div class="combo c148"><i class="sq"></i><span class="mono">ByLayer</span><svg class="ch" viewBox="0 0 12 7"><use href="#chev"/></svg></div></div>
      <div class="tb w3"><div class="combo c159"><i class="ln l60"></i><span class="mono">ByLayer</span><svg class="ch" viewBox="0 0 12 7"><use href="#chev"/></svg></div></div>
      <div class="tb w3"><div class="combo c123"><i class="ln l36"></i><span class="mono">ByLayer</span><svg class="ch" viewBox="0 0 12 7"><use href="#chev"/></svg></div></div>
      <div class="tb w3"><div class="combo c118 dis"><span class="mono gy">BYCOLOR</span><svg class="ch" viewBox="0 0 12 7"><use href="#chev"/></svg></div></div>
    </div>

    <div class="row r3">
      <div class="tb">
        <svg class="i" viewBox="0 0 20 20"><use href="#p1"/></svg><svg class="i" viewBox="0 0 20 20"><use href="#p2"/></svg><svg class="i" viewBox="0 0 20 20"><use href="#p3"/></svg><svg class="i" viewBox="0 0 20 20"><use href="#p4"/></svg><s></s>
        <svg class="i" viewBox="0 0 20 20"><use href="#q1"/></svg><svg class="i" viewBox="0 0 20 20"><use href="#q2"/></svg><svg class="i" viewBox="0 0 20 20"><use href="#q3"/></svg><svg class="i" viewBox="0 0 20 20"><use href="#q4"/></svg><svg class="i" viewBox="0 0 20 20"><use href="#q4"/></svg><s></s>
        <svg class="i" viewBox="0 0 20 20"><use href="#a1"/></svg><svg class="i" viewBox="0 0 20 20"><use href="#a2"/></svg><svg class="i" viewBox="0 0 20 20"><use href="#a3"/></svg><svg class="i" viewBox="0 0 20 20"><use href="#a4"/></svg><svg class="i" viewBox="0 0 20 20"><use href="#a5"/></svg><svg class="i" viewBox="0 0 20 20"><use href="#a6"/></svg><svg class="i" viewBox="0 0 20 20"><use href="#a7"/></svg><svg class="i" viewBox="0 0 20 20"><use href="#a8"/></svg>
      </div>
      <div class="tb">
        <svg class="i" viewBox="0 0 20 20"><use href="#y1"/></svg><svg class="i" viewBox="0 0 20 20"><use href="#y2"/></svg><svg class="i" viewBox="0 0 20 20"><use href="#y3"/></svg><svg class="i" viewBox="0 0 20 20"><use href="#y4"/></svg><s></s>
        <svg class="i" viewBox="0 0 20 20"><use href="#w1"/></svg><svg class="i" viewBox="0 0 20 20"><use href="#w2"/></svg><svg class="i" viewBox="0 0 20 20"><use href="#w3"/></svg><s></s>
        <svg class="i" viewBox="0 0 20 20"><use href="#w4"/></svg><s></s>
        <svg class="i" viewBox="0 0 20 20"><use href="#w5"/></svg><svg class="i" viewBox="0 0 20 20"><use href="#w6"/></svg><s></s>
        <em class="ct">新</em><em class="ct">原</em>
      </div>
      <div class="tb">
        <svg class="i" viewBox="0 0 20 20"><use href="#c1"/></svg><svg class="i" viewBox="0 0 20 20"><use href="#c2"/></svg><svg class="i" viewBox="0 0 20 20"><use href="#c3"/></svg><svg class="i" viewBox="0 0 20 20"><use href="#c4"/></svg><svg class="i" viewBox="0 0 20 20"><use href="#c5"/></svg><svg class="i" viewBox="0 0 20 20"><use href="#c6"/></svg><svg class="i" viewBox="0 0 20 20"><use href="#c7"/></svg><s></s>
        <svg class="i" viewBox="0 0 20 20"><use href="#c8"/></svg><svg class="i" viewBox="0 0 20 20"><use href="#c9"/></svg><s></s>
        <svg class="i" viewBox="0 0 20 20"><use href="#d1"/></svg><em class="ct">槽</em><em class="ct">桥</em><svg class="i" viewBox="0 0 20 20"><use href="#d2"/></svg><svg class="i" viewBox="0 0 20 20"><use href="#d3"/></svg><svg class="i" viewBox="0 0 20 20"><use href="#p1"/></svg>
      </div>
      <div class="tb">
        <svg class="i" viewBox="0 0 20 20"><use href="#d4"/></svg><em class="bigA">A</em>
      </div>
    </div>

    <div class="body">
      <aside class="lpanel">
        <div class="lgrip"><i class="dots v"></i></div>
        <div class="lbtn head">管道</div>
        <ul class="list">
          <li><svg viewBox="0 0 16 18"><use href="#bk"/></svg><span>切换经典界面</span></li>
          <li><svg viewBox="0 0 16 18"><use href="#bk"/></svg><span>人手孔管道图</span></li>
          <li><svg viewBox="0 0 16 18"><use href="#bk"/></svg><span>人手孔、集水井</span></li>
          <li><svg viewBox="0 0 16 18"><use href="#bk"/></svg><span>人手孔</span></li>
          <li><svg viewBox="0 0 16 18"><use href="#bk"/></svg><span>管道</span></li>
          <li><svg viewBox="0 0 16 18"><use href="#bk"/></svg><span>开挖路面</span></li>
          <li><svg viewBox="0 0 16 18"><use href="#bk"/></svg><span>管道高程图</span></li>
          <li><svg viewBox="0 0 16 18"><use href="#bk"/></svg><span>管道断面</span></li>
          <li><svg viewBox="0 0 16 18"><use href="#bk"/></svg><span>管道断面（自动）</span></li>
          <li><svg viewBox="0 0 16 18"><use href="#bk"/></svg><span>人手孔断面图</span></li>
          <li><svg viewBox="0 0 16 18"><use href="#bk"/></svg><span>子管状态</span></li>
          <li><svg viewBox="0 0 16 18"><use href="#bk"/></svg><span>特殊管道断面</span></li>
          <li><svg viewBox="0 0 16 18"><use href="#bk"/></svg><span>修改高程信息</span></li>
          <li><svg viewBox="0 0 16 18"><use href="#bk"/></svg><span>通讯管道图</span></li>
        </ul>
        <div class="lbtn">杆路</div><div class="lbtn">缆线</div><div class="lbtn">直埋光缆</div><div class="lbtn">移动网络组织图</div><div class="lbtn">综合布线</div><div class="lbtn">有线电视</div><div class="lbtn">机房</div><div class="lbtn">辅助功能</div><div class="lbtn">批量修改</div>
      </aside>

      <div class="main">
        <div class="work">
          <div class="ltools">
            <div class="vt">
              <i class="dots"></i>
              <svg viewBox="0 0 20 20"><use href="#v1"/></svg><svg viewBox="0 0 20 20"><use href="#v2"/></svg><svg viewBox="0 0 20 20"><use href="#v3"/></svg><svg viewBox="0 0 20 20"><use href="#v4"/></svg><svg viewBox="0 0 20 20"><use href="#v5"/></svg><s></s>
              <svg viewBox="0 0 20 20"><use href="#v6"/></svg><svg viewBox="0 0 20 20"><use href="#v7"/></svg><svg viewBox="0 0 20 20"><use href="#v8"/></svg><svg viewBox="0 0 20 20"><use href="#v9"/></svg><svg viewBox="0 0 20 20"><use href="#v10"/></svg><svg viewBox="0 0 20 20"><use href="#v11"/></svg><svg viewBox="0 0 20 20"><use href="#v12"/></svg><svg viewBox="0 0 20 20"><use href="#v13"/></svg><svg viewBox="0 0 20 20"><use href="#v14"/></svg><svg viewBox="0 0 20 20"><use href="#v15"/></svg><svg viewBox="0 0 20 20"><use href="#v16"/></svg>
            </div>
            <div class="vt grow">
              <i class="dots"></i>
              <svg viewBox="0 0 20 20"><use href="#u1"/></svg><svg viewBox="0 0 20 20"><use href="#u2"/></svg><svg viewBox="0 0 20 20"><use href="#u3"/></svg><svg viewBox="0 0 20 20"><use href="#u4"/></svg><em class="vtx">GYS</em><em class="vtx bl2">HYA</em><svg viewBox="0 0 20 20"><use href="#u7"/></svg><svg viewBox="0 0 20 20"><use href="#u8"/></svg><svg viewBox="0 0 20 20"><use href="#u9"/></svg><svg viewBox="0 0 20 20"><use href="#u10"/></svg><s></s>
              <svg viewBox="0 0 20 20"><use href="#u11"/></svg><svg viewBox="0 0 20 20"><use href="#u12"/></svg><svg viewBox="0 0 20 20"><use href="#u13"/></svg><svg viewBox="0 0 20 20"><use href="#u14"/></svg><s></s>
              <svg viewBox="0 0 20 20"><use href="#u15"/></svg><svg viewBox="0 0 20 20"><use href="#u16"/></svg><svg viewBox="0 0 20 20"><use href="#u17"/></svg><s></s>
              <svg viewBox="0 0 20 20"><use href="#u18"/></svg><svg viewBox="0 0 20 20"><use href="#u19"/></svg>
            </div>
          </div>

          <div class="center">
            <svg class="draw" viewBox="134 139 1696 786">
              <g class="yl" transform="translate(680 450) scale(.33333)">
                <path d="M285 595L305 601 370 602 445 613 690 613 780 597 865 568 960 510 1060 430 1160 345 1260 270"/>
                <path d="M273 647L330 655 405 660 510 667 620 665 690 660 760 650 890 617 960 570 1060 490 1150 410 1260 335"/>
                <path d="M672 665L690 680 730 690 770 683 800 660 815 640"/>
              </g>
              <g class="yl" transform="translate(960 420) scale(.33333)">
                <path d="M0 665L30 655 120 600 215 525 325 430 425 355 560 300 750 245 1000 175 1140 135 1320 55 1420 0"/>
                <path d="M0 720L50 705 150 645 250 565 340 490 450 402 580 350 780 295 1000 232 1160 185 1320 115 1410 60 1570 0"/>
              </g>
              <g class="yl2" transform="scale(1.2245)">
                <path d="M1170 343L1215 330 1255 312 1275 282 1290 245 1303 205 1315 192 1345 180 1440 150 1480 130 1493 113"/>
                <path d="M1211 343L1262 325 1282 295 1298 250 1312 215 1328 202 1360 190 1450 160 1490 140 1495 135"/>
              </g>
              <g class="wh" transform="translate(680 450) scale(.33333)">
                <path d="M720 737L900 680 1020 655 1260 575"/><path d="M727 758L900 700 1020 675 1260 597"/>
                <path d="M520 270L590 260 650 275 740 310 790 360 815 440 810 500 760 555 680 575 600 572 560 550 510 500 470 410 447 340 450 300 480 280Z"/>
                <path d="M620 525L570 510 530 460 520 420 495 360 490 325 530 310 600 300 680 325 750 360 770 420 772 470"/>
                <path d="M600 440L640 463 700 450 690 420 640 390 580 378"/>
                <path d="M130 330L110 320 80 325 60 345 47 400 50 470 75 505 120 535 200 548 270 542 330 520 370 475 382 420 375 350 340 300 270 260 210 265 160 295Z"/>
                <path class="tk" d="M63 340h14M48 390h14M43 441h14M60 493h14M98 526h14M146 543h14M201 547h14M255 540h14M306 522h14M347 490h14M367 440h14M370 390h14M356 338h14M325 294h14M278 270h14M226 268h14M176 286h14M136 320h14"/>
                <path d="M510 155L560 146M510 175L550 178M632 530L700 520M1050 740L1090 748"/>
                <path class="tk2" d="M557 145h49M552 178h53M700 514h44M720 632h80M1092 746h53"/>
              </g>
              <g class="wh" transform="translate(960 420) scale(.33333)">
                <path d="M0 788L70 765 240 730 340 695 460 650 600 610 760 605 950 605 1100 580 1240 553 1320 552"/>
                <path d="M0 812L70 790 270 740 400 695 520 650 640 628 830 630 950 625 1100 600 1250 577 1320 577"/>
                <path d="M207 833L245 840M1167 747L1210 755"/>
                <path class="tk2" d="M250 837h55M1210 752h60"/>
                <use href="#ra" x="240" y="735"/><use href="#ra" x="60" y="782"/><use href="#ra" x="580" y="630"/><use href="#ra" x="955" y="615"/><use href="#ra" x="1280" y="567"/>
              </g>
              <g class="wh" transform="translate(1400 420) scale(.33333)">
                <path d="M0 552L100 572 250 625 330 655 500 710 680 745 830 757 1000 745 1290 705"/>
                <path d="M0 577L100 595 250 650 400 705 640 765 800 778 950 775 1290 730"/>
                <path d="M565 892L600 897"/><path class="tk2" d="M603 893h52"/>
                <use href="#ra" x="318" y="670"/><use href="#ra" x="950" y="760"/>
              </g>
              <g class="wh" transform="translate(680 450) scale(.33333)">
                <use href="#ra" x="905" y="690"/><use href="#ra" x="805" y="720"/><use href="#ra" x="1085" y="645"/>
              </g>
              <g class="wh" transform="translate(400 680) scale(.33333)">
                <path d="M122 362L165 275 220 178 270 128 330 100 370 102 420 128 470 165 520 220 570 290 610 358 632 380 650 360 670 285 710 205 760 155 810 136 840 150 860 200 885 285 915 350 940 370 960 345 985 245 1010 226 1040 245 1100 320 1148 382"/>
              </g>
              <text class="mt" x="617" y="724">雪</text><text class="mt" x="617" y="752">山</text>

              <g class="gr" transform="translate(680 450) scale(.33333)">
                <path class="g1" d="M475 115L495 165 555 310 598 430 632 525 742 670 812 760"/>
                <path class="g2" d="M812 760L945 740 1050 720 1155 703 1260 685"/>
                <path class="gn" d="M495 165h0M552 310h0M598 430h0M632 525h0M742 670h0M812 760h0M945 740h0M1050 720h0M1155 703h0"/>
                <path class="gf" d="M495 155L455 165 447 190 470 199 505 190ZM632 530L565 552 590 560 625 556 655 545ZM810 760L778 772 800 778 785 812 772 820 815 812 838 802 835 780Z"/>
                <text class="gt" x="537" y="240">55</text><text class="gt" x="588" y="372">55</text><text class="gt" x="630" y="483">55</text><text class="gt" x="698" y="600">55</text><text class="gt" x="786" y="712">55</text>
              </g>
              <g class="gr" transform="translate(960 420) scale(.33333)">
                <path class="g2" d="M0 848L104 830 210 812 316 793 476 768 619 745 771 717 903 694 1016 675 1175 715 1320 757"/>
                <path class="gn" d="M104 830h0M210 812h0M316 793h0M476 768h0M619 745h0M771 717h0M903 694h0M1016 678h0M1175 715h0"/>
                <path class="g3" d="M1016 618V700"/>
                <text class="gt" x="37" y="833">55</text><text class="gt" x="152" y="815">55</text><text class="gt" x="258" y="797">55</text><text class="gt" x="393" y="776">55</text><text class="gt" x="544" y="751">55</text><text class="gt" x="690" y="725">44</text><text class="gt" x="835" y="699">44</text><text class="gt" x="957" y="676">53</text><text class="gt" x="1100" y="688">52</text><text class="gt" x="1255" y="730">46</text>
              </g>
              <g class="gr" transform="translate(1400 420) scale(.33333)">
                <path class="g2" d="M12 757L155 795 295 832 450 870 550 872 655 870 750 868 836 868 922 868 1017 866 1117 865 1236 864 1290 864"/>
                <path class="gn" d="M12 757h0M155 795h0M295 832h0M450 870h0M550 872h0M655 870h0M750 868h0M836 868h0M922 868h0M1017 866h0M1117 865h0M1236 864h0"/>
                <path class="gf" d="M413 880H450L478 902 472 920 445 927 420 934 433 905 440 888 413 888Z"/>
                <text class="gt" x="88" y="770">48</text><text class="gt" x="228" y="808">51</text><text class="gt" x="376" y="847">52</text><text class="gt" x="498" y="863">56</text><text class="gt" x="600" y="862">55</text><text class="gt" x="700" y="862">56</text><text class="gt" x="790" y="861">48</text><text class="gt" x="877" y="860">55</text><text class="gt" x="968" y="860">46</text><text class="gt" x="1065" y="857">58</text><text class="gt" x="1173" y="857">56</text>
              </g>

              <g class="trs" transform="translate(680 450) scale(.33333)">
                <use href="#tr" x="564" y="68"/><use href="#tr" x="625" y="155"/><use href="#tr" x="660" y="200"/><use href="#tr" x="714" y="272"/><use href="#tr" x="780" y="335"/><use href="#tr" x="491" y="433"/><use href="#tr" x="700" y="482"/><use href="#tr" x="775" y="482"/><use href="#tr" x="715" y="535"/><use href="#tr" x="544" y="550"/>
              </g>
              <g class="trs" transform="translate(960 420) scale(.33333)">
                <use href="#tr" x="589" y="665"/><use href="#tr" x="1207" y="650"/><use href="#tr" x="1057" y="738"/><use href="#tr" x="910" y="795"/><use href="#tr" x="718" y="818"/><use href="#tr" x="1042" y="818"/><use href="#tr" x="1183" y="803"/><use href="#tr" x="148" y="925"/><use href="#tr" x="313" y="890"/><use href="#tr" x="502" y="878"/><use href="#tr" x="832" y="902"/><use href="#tr" x="966" y="916"/><use href="#tr" x="1177" y="916"/><use href="#tr" x="669" y="940"/><use href="#tr" x="252" y="980"/><use href="#tr" x="451" y="967"/><use href="#tr" x="760" y="1004"/><use href="#tr" x="967" y="998"/><use href="#tr" x="1084" y="998"/><use href="#tr" x="1270" y="1040"/><use href="#tr" x="196" y="1092"/><use href="#tr" x="391" y="1108"/><use href="#tr" x="556" y="1088"/><use href="#tr" x="871" y="1085"/><use href="#tr" x="822" y="1115"/><use href="#tr" x="1030" y="1142"/><use href="#tr" x="1288" y="1180"/><use href="#tr" x="1298" y="328"/><use href="#tr" x="1318" y="407"/>
              </g>
              <g class="trs" transform="translate(1400 420) scale(.33333)">
                <use href="#tr" x="163" y="113"/><use href="#tr" x="306" y="103"/><use href="#tr" x="436" y="125"/><use href="#tr" x="930" y="63"/><use href="#tr" x="1200" y="62"/><use href="#tr" x="181" y="190"/><use href="#tr" x="316" y="176"/><use href="#tr" x="526" y="195"/><use href="#tr" x="798" y="200"/><use href="#tr" x="1154" y="235"/><use href="#tr" x="1287" y="237"/><use href="#tr" x="436" y="263"/><use href="#tr" x="121" y="320"/><use href="#tr" x="862" y="326"/><use href="#tr" x="507" y="350"/><use href="#tr" x="1006" y="368"/><use href="#tr" x="132" y="392"/><use href="#tr" x="310" y="400"/><use href="#tr" x="331" y="480"/><use href="#tr" x="447" y="468"/><use href="#tr" x="624" y="473"/><use href="#tr" x="985" y="487"/><use href="#tr" x="577" y="568"/><use href="#tr" x="874" y="592"/><use href="#tr" x="61" y="686"/><use href="#tr" x="209" y="718"/><use href="#tr" x="327" y="738"/><use href="#tr" x="430" y="785"/><use href="#tr" x="589" y="803"/><use href="#tr" x="1092" y="788"/><use href="#tr" x="31" y="816"/><use href="#tr" x="224" y="889"/><use href="#tr" x="30" y="913"/><use href="#tr" x="341" y="946"/><use href="#tr" x="165" y="973"/><use href="#tr" x="277" y="983"/><use href="#tr" x="445" y="978"/><use href="#tr" x="657" y="962"/><use href="#tr" x="871" y="967"/><use href="#tr" x="1071" y="992"/><use href="#tr" x="1214" y="983"/><use href="#tr" x="39" y="1015"/><use href="#tr" x="600" y="1068"/><use href="#tr" x="711" y="1055"/><use href="#tr" x="837" y="1052"/><use href="#tr" x="942" y="1048"/><use href="#tr" x="1090" y="1070"/><use href="#tr" x="1225" y="1057"/><use href="#tr" x="1035" y="1128"/><use href="#tr" x="252" y="1078"/><use href="#tr" x="432" y="1090"/><use href="#tr" x="123" y="1130"/><use href="#tr" x="849" y="1187"/><use href="#tr" x="570" y="1215"/><use href="#tr" x="1139" y="1198"/>
              </g>

              <g class="ucs">
                <path d="M150 892h16v16h-16zM158 892V825M166 900H233M152 825L158 806 164 825ZM233 893L252 900 233 907Z"/>
              </g>
              <text class="ax" x="159" y="792">Y</text><text class="ax" x="273" y="908">X</text>
            </svg>
            <div class="tabbar">
              <div class="navs">
                <svg viewBox="0 0 12 14"><path d="M2 1v12M10 1L4 7l6 6z"/></svg>
                <svg viewBox="0 0 12 14"><path d="M9 1L3 7l6 6z"/></svg>
                <svg viewBox="0 0 12 14"><path d="M3 1l6 6-6 6z"/></svg>
                <svg viewBox="0 0 12 14"><path d="M2 1l6 6-6 6zM10 1v12"/></svg>
              </div>
              <div class="mtab act">模型</div>
              <div class="mtab">布局1</div>
            </div>
          </div>

          <div class="rtools">
            <div class="rcol">
              <div class="vt r">
                <i class="dots"></i>
                <svg viewBox="0 0 20 20"><use href="#rA1"/></svg><svg viewBox="0 0 20 20"><use href="#rA2"/></svg><svg viewBox="0 0 20 20"><use href="#rA3"/></svg><svg viewBox="0 0 20 20"><use href="#rA4"/></svg><svg viewBox="0 0 20 20"><use href="#rA5"/></svg><svg viewBox="0 0 20 20"><use href="#rA6"/></svg><svg viewBox="0 0 20 20"><use href="#rA7"/></svg><svg viewBox="0 0 20 20"><use href="#rA8"/></svg><svg viewBox="0 0 20 20"><use href="#rA9"/></svg><svg viewBox="0 0 20 20"><use href="#rA10"/></svg><svg viewBox="0 0 20 20"><use href="#rA11"/></svg><svg viewBox="0 0 20 20"><use href="#rA12"/></svg><svg viewBox="0 0 20 20"><use href="#rA13"/></svg><svg viewBox="0 0 20 20"><use href="#rA14"/></svg><svg viewBox="0 0 20 20"><use href="#rA15"/></svg><svg viewBox="0 0 20 20"><use href="#rA16"/></svg><svg viewBox="0 0 20 20"><use href="#rA17"/></svg>
              </div>
              <div class="vt r">
                <i class="dots"></i>
                <svg viewBox="0 0 20 20"><use href="#st1"/></svg><svg viewBox="0 0 20 20"><use href="#st2"/></svg><svg viewBox="0 0 20 20"><use href="#st3"/></svg><svg viewBox="0 0 20 20"><use href="#st4"/></svg>
              </div>
            </div>
            <div class="rcol">
              <div class="vt r">
                <i class="dots"></i>
                <svg viewBox="0 0 20 20"><use href="#b1"/></svg><svg viewBox="0 0 20 20"><use href="#b2"/></svg><svg viewBox="0 0 20 20"><use href="#b3"/></svg><svg viewBox="0 0 20 20"><use href="#b4"/></svg><svg viewBox="0 0 20 20"><use href="#b5"/></svg><svg viewBox="0 0 20 20"><use href="#b6"/></svg><svg viewBox="0 0 20 20"><use href="#b7"/></svg><svg viewBox="0 0 20 20"><use href="#b8"/></svg><svg viewBox="0 0 20 20"><use href="#b9"/></svg><svg viewBox="0 0 20 20"><use href="#b10"/></svg><svg viewBox="0 0 20 20"><use href="#b11"/></svg><svg viewBox="0 0 20 20"><use href="#b12"/></svg><svg viewBox="0 0 20 20"><use href="#b13"/></svg><svg viewBox="0 0 20 20"><use href="#b14"/></svg><svg viewBox="0 0 20 20"><use href="#b15"/></svg><svg viewBox="0 0 20 20"><use href="#b16"/></svg><svg viewBox="0 0 20 20"><use href="#b17"/></svg><svg viewBox="0 0 20 20"><use href="#b18"/></svg><em class="bigA2">A</em>
              </div>
            </div>
            <div class="rcol">
              <div class="vt r">
                <i class="dots"></i>
                <svg viewBox="0 0 20 20"><use href="#c_1"/></svg><svg viewBox="0 0 20 20"><use href="#c_2"/></svg><s></s>
                <svg viewBox="0 0 20 20"><use href="#c_3"/></svg><s></s>
                <svg viewBox="0 0 20 20"><use href="#c_4"/></svg><svg viewBox="0 0 20 20"><use href="#c_5"/></svg><svg viewBox="0 0 20 20"><use href="#c_6"/></svg><s></s>
                <svg viewBox="0 0 20 20"><use href="#c_7"/></svg><svg viewBox="0 0 20 20"><use href="#c_8"/></svg><svg viewBox="0 0 20 20"><use href="#c_9"/></svg><svg viewBox="0 0 20 20"><use href="#c_10"/></svg><s></s>
                <svg viewBox="0 0 20 20"><use href="#c_11"/></svg><svg viewBox="0 0 20 20"><use href="#c_12"/></svg><svg viewBox="0 0 20 20"><use href="#c_13"/></svg>
              </div>
            </div>
          </div>
        </div>

        <div class="cmd">
          <div class="cgrip"><i class="dots"></i></div>
          <div class="clines">
            <div class="cl1">
              <div class="ctext"><span class="wide"><span class="lat">Autodesk DWG</span>。<span class="lat sp">   </span>此文件上次由<span class="lat"> Autodesk </span>应用程序或<span class="lat"> Autodesk </span>许可的应用程序保存，是可靠的<span class="lat"> DWG</span>。</span></div>
              <div class="vs"><svg viewBox="0 0 12 8"><path d="M1 7l5-5 5 5"/></svg><svg viewBox="0 0 12 8"><path d="M1 1l5 5 5-5"/></svg></div>
            </div>
            <div class="cl2">
              <div class="ctext"><span class="wide">命令<span class="lat">:</span></span></div>
              <div class="hs"><svg viewBox="0 0 8 12"><path d="M7 1L2 6l5 5"/></svg><i class="thumb"></i><svg viewBox="0 0 8 12"><path d="M1 1l5 5-5 5"/></svg></div>
            </div>
          </div>
        </div>
      </div>
    </div>

    <footer class="status">
      <div class="coords">-8026.7695, 1405.2306, 0.0000</div>
      <div class="tg"><svg viewBox="0 0 16 16"><path d="M3 13h10M13 3v10M3 3v1M6 3v1M9 3v1M3 7v1M6 7v1M9 7v1M3 10v1M6 10v1M9 10v1" stroke-dasharray="1 1"/></svg></div>
      <div class="tg"><svg viewBox="0 0 16 16"><path d="M2 2h12v12H2zM5 2v12M8 2v12M11 2v12M2 5h12M2 8h12M2 11h12"/></svg></div>
      <div class="tg"><svg viewBox="0 0 16 16"><path d="M2 1v13h13M2 9h5v5"/></svg></div>
      <div class="tg"><svg viewBox="0 0 16 16"><circle cx="7" cy="9" r="5"/><path d="M7 9l7-7M7 9h7"/></svg></div>
      <div class="tg on"><svg viewBox="0 0 16 16"><path d="M4 3h10v12H4z" class="wf"/><path d="M1 1h3v3H1z" class="or"/></svg></div>
      <div class="tg on"><svg viewBox="0 0 16 16"><path d="M2 14h12M2 14l9-10M8 14c0-3-1-4-2-5"/></svg></div>
      <div class="tg on"><svg viewBox="0 0 16 16"><path d="M2 15h13M2 15V3M2 15l9-8"/><path d="M13 1l-2 4h2l-2 4 5-5h-2l2-3z" class="or"/></svg></div>
      <div class="tg"><svg viewBox="0 0 16 16"><path d="M6 2v10M1 7h10M8 9h6v3H8z" stroke-width="1.4"/></svg></div>
      <div class="tg on"><svg viewBox="0 0 16 16"><path d="M8 1v14M1 8h14" stroke-width="2"/></svg></div>
      <div class="tg on"><svg viewBox="0 0 16 16"><path d="M4 1h8v14H4z" stroke-width="1.3"/><path d="M6 4h4M6 7h1M9 7h1M6 10h1M9 10h1M6 12h1M9 12h1" stroke-width="1.4"/></svg></div>
      <div class="spring"></div>
      <div class="tg mdl">模型</div>
      <div class="tg"><svg viewBox="0 0 16 16"><path d="M3 1h10v10H3zM3 14h10"/><path d="M6 3v6h4" stroke-width="1.4"/></svg></div>
      <div class="tg gap18"><svg viewBox="0 0 16 16"><path d="M1 2h6v7H1zM9 2h6v7H9zM1 13h14" stroke-width="1.3"/></svg></div>
      <div class="tg"><svg viewBox="0 0 20 20"><use href="#pan"/></svg></div>
      <div class="tg"><svg viewBox="0 0 20 20"><use href="#zoom"/></svg></div>
      <div class="tg"><svg viewBox="0 0 16 16"><circle cx="8" cy="8" r="6"/><circle cx="8" cy="8" r="3"/><path d="M4 4l8 8M12 4L4 12"/></svg></div>
      <div class="tg gap19"><svg viewBox="0 0 16 16"><path d="M2 6h12v9H2zM6 9v4l4-2zM2 1h3v3H2zM7 1h3v3H7zM11 1h3v3h-3z"/></svg></div>
      <div class="tg anno"><svg viewBox="0 0 16 16"><path d="M8 1L5 10l-4 4 5-2 2 3 2-3 5 2-4-4z"/></svg><span>1:1</span><i class="tri"></i></div>
      <div class="tg"><svg viewBox="0 0 16 16"><path d="M8 1L5 10l-4 4 5-2 2 3 2-3 5 2-4-4z"/><circle cx="12" cy="9" r="2.5" class="or"/></svg></div>
      <div class="tg gap5"><svg viewBox="0 0 16 16"><path d="M8 1L5 10l-4 4 5-2 2 3 2-3 5 2-4-4z" class="gy2"/></svg></div>
      <div class="tg w26"><svg viewBox="0 0 20 20"><use href="#gear"/></svg></div>
      <div class="tg w26"><svg viewBox="0 0 16 16"><path d="M2 8h7v7H2zM8 8V4c0-4 6-4 6 0v2"/></svg></div>
      <div class="tg w26 dk"><svg viewBox="0 0 16 16"><path d="M2 1h8l3 3v8" class="wf"/><path d="M2 1v13h6M1 6h9M5 2v8"/><path d="M8 12l2 3 5-5" class="ck"/></svg></div>
      <div class="tg w10"><i class="tri"></i></div>
      <div class="tg w19"><svg viewBox="0 0 16 16"><path d="M1 2h14v12H1zM1 5h14" class="wf"/></svg></div>
    </footer>
  </div>

  <footer class="taskbar">
    <svg class="ti win" viewBox="0 0 20 20"><path d="M0 3l8-1v7.500H0zM9 2l11-2v9.500H9zM0 10.500h8V18l-8-1zM9 10.500h11V20L9 18.500z"/></svg>
    <svg class="ti ring" viewBox="0 0 20 20"><circle cx="10" cy="10" r="8"/></svg>
    <svg class="ti tv" viewBox="0 0 20 20"><path d="M1 2h11M1 18h11M1 6h11v8H1zM17 2v4M17 8v4M17 14v4"/></svg>
    <svg class="ti store" viewBox="0 0 30 34"><path d="M1 9h28v24H1z" class="tw"/><path d="M10 9c0-10 10-10 10 0" class="bag"/><path d="M8 14h6v6H8z" class="r1c"/><path d="M16 14h6v6h-6z" class="g1c"/><path d="M8 22h6v6H8z" class="b1c"/><path d="M16 22h6v6h-6z" class="y1c"/></svg>
    <svg class="ti bird" viewBox="0 0 30 34"><rect x="1" y="1" width="28" height="32" rx="3" class="fea"/><path d="M4 6l13 6 9-7-6 12 2 13-7-10-7 2 4-5z" class="feb"/></svg>
    <div class="ti edge"><svg viewBox="0 0 30 34"><path d="M5 19h21c1-10-5-14-11-14C8 5 3 11 2 17 6 10 12 8 16 10c3 1 4 3 4 5H9c0 8 9 12 16 7v6c-9 4-22 1-23-11" class="edg"/></svg></div>
    <svg class="ti mailb" viewBox="0 0 30 34"><path d="M1 14L15 4l14 10v17H1z" class="tw"/><path d="M1 14l14 10 14-10M1 31l11-10" class="mail"/></svg>
    <div class="ti acad"><svg viewBox="0 0 30 34"><path d="M5 10h24v22H5z" class="pg"/><path d="M3 25L12 2h4l7 23h-6l-1-6h-6l-2 6z" class="lg1"/></svg></div>
    <div class="spring"></div>
    <div class="tray">
      <svg class="ppl" viewBox="0 0 20 20"><circle cx="12" cy="5" r="3"/><circle cx="7" cy="9" r="3"/><path d="M2 18c0-5 2-6 5-6s5 1 5 6M13 8c3 0 5 2 5 7"/></svg>
      <svg viewBox="0 0 20 20"><path d="M1 1h18v18H1z" class="nv"/><ellipse cx="10" cy="10" rx="7" ry="5" class="nv2"/><circle cx="9" cy="10" r="2" class="nv"/></svg>
      <svg viewBox="0 0 20 20"><rect x="2" y="1" width="16" height="18" rx="3" class="ck2"/><circle cx="10" cy="10" r="6" class="ck3"/><path d="M10 5v4" class="ck4"/></svg>
      <svg viewBox="0 0 20 20"><path d="M7 2h8v12H7z" class="cp"/><path d="M3 6h8v12H3z" class="cp2"/></svg>
      <svg viewBox="0 0 20 20"><ellipse cx="10" cy="8" rx="6" ry="7" class="qk"/><ellipse cx="10" cy="13" rx="4" ry="5" class="tw"/><path d="M5 11h10l-3 3v3h-2v-3z" class="qr"/><path d="M4 18h5M11 18h5" class="qy"/></svg>
      <svg viewBox="0 0 20 20"><path d="M3 16a4 4 0 0 1 1-8c1-5 9-5 10 0a4 4 0 0 1 2 8z" class="tw"/></svg>
      <svg viewBox="0 0 20 20"><path d="M1 6l8-3 8 3v8H1z" class="gy3"/><path d="M6 12l4 5 9-12" class="ck5"/></svg>
      <svg viewBox="0 0 20 20"><rect x="3" y="0" width="14" height="20" rx="7" class="bt"/><path d="M6 6l8 8-4 4V2l4 4-8 8" class="btw"/></svg>
      <svg viewBox="0 0 20 20"><path d="M1 1h18v18H1z" class="sq1"/><path d="M5 5h10v8H5zM7 15h8" class="btw"/></svg>
      <svg viewBox="0 0 20 20"><rect x="1" y="1" width="18" height="18" rx="2" class="sq2"/><path d="M12 4l-5 7h3l-2 5 5-7h-3z" class="tw"/></svg>
      <svg viewBox="0 0 20 20"><path d="M9 1l8 3v6c0 5-4 7-8 9-4-2-8-4-8-9V4z" class="tw"/><path d="M9 1v18M1 9h16" class="sh"/><path d="M14 10l6 10H8z" class="wn"/></svg>
      <svg viewBox="0 0 20 20"><rect x="1" y="1" width="18" height="18" rx="1" class="sq3"/><path d="M12 4l-5 7h3l-2 5 5-7h-3z" class="tw"/></svg>
      <svg viewBox="0 0 20 20"><path d="M1 8h5M3 5v3M6 5v3M7 8h12v9H7z" class="tl"/></svg>
      <svg viewBox="0 0 20 20"><path d="M5 3h14v11H5zM12 14v4M8 18h8M1 2h5v7H1z" class="tl"/></svg>
      <svg viewBox="0 0 20 20"><path d="M2 7h3l5-4v14l-5-4H2zM13 7c1 2 1 4 0 6M16 4c2 4 2 8 0 12" class="tl"/></svg>
      <span class="ime">中</span>
    </div>
    <div class="clock"><span>11:04</span><span>2018/11/2</span></div>
    <svg class="notif" viewBox="0 0 20 20"><path d="M1 1h18v15h-6l-3 3-3-3H1z"/></svg>
  </footer>
</div>
</body>
</html>
```
FILE: styles.css
```css
*{box-sizing:border-box}
html,body{margin:0;padding:0;width:1920px;height:1080px;overflow:hidden}
body{font-family:"Noto Sans CJK SC","Noto Sans",sans-serif;background:#666}
.defs{position:absolute;width:0;height:0}
.screen{width:1920px;height:1080px;display:flex;flex-direction:column;position:relative;overflow:hidden}
.spring{flex:1}
s{display:block;text-decoration:none}

/* browser tabs */
.tabstrip{height:28px;flex:none;background:#cdcdcd;display:flex;overflow:hidden;color:#333;font-size:16px;position:relative}
.back{width:80px;flex:none;border-right:1px solid #aaa;padding:12px 0 0 50px}
.backi{width:22px;height:14px;display:block;fill:none;stroke:#222;stroke-width:1.5}
.tab{width:250.500px;flex:none;display:flex;padding:10px 0 0 12px;border-right:1px solid #aaa;white-space:nowrap;line-height:22px;position:relative;overflow:hidden}
.tab span{margin-left:10px}
.tab.on{background:#f2f2f2;width:249px}
.fav{width:20px;height:20px;flex:none}
.bl{fill:#2f6fe8}
.rb{width:20px;height:20px;flex:none;display:block;background:linear-gradient(135deg,#e04040 0,#f09020 20%,#f0e020 40%,#30c040 60%,#2090e0 80%,#a040c0 100%);border:2px solid #f4f4f4}
.tx{position:absolute;left:224px;top:15px;width:13px;height:13px;fill:none;stroke:#444;stroke-width:1.2}
.plus{width:16px;height:16px;margin:16px 0 0 13px;fill:none;stroke:#444;stroke-width:1.3;flex:none}
.vee{width:15px;height:10px;margin:20px 0 0 24px;fill:none;stroke:#444;flex:none}
.sbox{width:300px;height:22px;margin:2px 8px 0 0;background:#fff;flex:none;display:flex;justify-content:flex-end;align-items:flex-start}
.sbtn{width:27.500px;height:19px;background:#cfcfcf;border:1px solid #111;display:flex;align-items:center;justify-content:center}
.tiny{width:15px;height:15px;fill:none;stroke:#333}
.apptitle{position:absolute;left:776px;top:8px;width:340px;color:#fff;font-size:13.500px;line-height:20px;white-space:nowrap;overflow:hidden;opacity:.9;z-index:3}

/* cad window */
.cad{flex:1;min-height:0;display:flex;flex-direction:column;position:relative;border-top:1px solid #333;background:linear-gradient(#7c7c7c 0,#666 27px,#666 100%)}
.logo{position:absolute;left:0;top:-20px;width:35px;height:44px;background:linear-gradient(#7d7d7d,#9a9a9a);border:1px solid #555;border-radius:3px;z-index:4}
.logo svg{width:33px;height:42px;display:block}
.lg1{fill:#d81818}.lg2{fill:#a00c0c}.lg3{fill:#901010}.lg4{fill:#111}
.menubar{height:26px;flex:none;display:flex;align-items:center;padding:0 0 2px 58px;gap:24.400px;color:#eee;font-size:12px;white-space:nowrap}
.menubar span{line-height:24px}
.winbtns{margin-left:auto;display:flex;gap:11px;padding-right:7px;align-items:center}
.winbtns svg{width:14px;height:14px;fill:#e8e8e8;stroke:#333}
.row{flex:none;display:flex;gap:2px;margin-bottom:4px;height:24px;align-items:stretch}
.r2{height:22px;margin-bottom:4px}
.r3{height:24px;margin-bottom:4px;gap:1px}
.tb{display:flex;align-items:center;background:#efefef;border:1px solid #333;border-left:8px solid #5e5e5e;flex:none}
.t1{width:646px}
.i{width:20px;height:20px;margin:0 1.400px;flex:none;fill:none;stroke:#222;stroke-width:1}
.i.nm{margin:0}
.n{width:12px;height:20px;flex:none}
.tb s{width:1px;height:18px;background:#aaa;margin:0 3px;flex:none}
.combo{display:flex;align-items:center;background:#fff;height:100%;position:relative;flex:none;white-space:nowrap;font-size:14px;color:#111}
.c118{width:118px}.c119{width:119px}.c175{width:175px}.c299{width:299px;padding-left:3px}.c148{width:153px;padding-left:8px}.c159{width:159px;padding-left:5px}.c123{width:121px;padding-left:5px}
.pl18{padding-left:18px}.pl4{padding-left:4px}
.ch{position:absolute;right:8px;top:50%;margin-top:-3px;width:11px;height:7px}
.cjk{font-size:15px;line-height:20px}
.std{font-family:"Noto Sans",sans-serif;font-size:14.500px;line-height:20px}
.mono{font-family:"Liberation Mono","Noto Sans CJK SC",monospace;font-size:13.300px}
.gy{color:#8c8c8c;background:#ededed;padding:2px 40px 2px 8px;margin-left:2px}
.dis{padding-left:0}
.li{width:17px;height:17px;fill:none;stroke:#222;flex:none}
.sq{width:9px;height:9px;border:1px solid #222;display:block;flex:none;margin:0 6px 0 1px}
.ln{display:block;height:1px;background:#111;margin-right:5px;flex:none}
.l60{width:60px}.l36{width:36px}
.w3{border-left-width:5px}
.ct{width:23px;font-style:normal;font-size:13px;text-align:center;line-height:20px;color:#222;flex:none}
.bigA{width:23px;font:normal 21px "Liberation Serif",serif;text-align:center;line-height:20px;flex:none;color:#111}

/* body */
.body{flex:1;min-height:0;display:flex;height:871px}
.lpanel{width:104px;flex:none;padding-left:5px;background:#6a6a6a;display:flex;flex-direction:column;overflow:hidden}
.lgrip{height:25px;width:100px;margin:1px 0 5px -5px;background:linear-gradient(#a8a8a8,#bcbcbc);border-radius:0 4px 0 0;border-bottom:1px solid #eee;padding:3px 0 0 4px;flex:none}
.dots{display:block;height:3px;width:14px;margin:3px auto 2px;background:repeating-linear-gradient(90deg,#111 0,#111 1px,transparent 1px,transparent 2px)}
.dots.v{width:3px;height:14px;margin:0;background:repeating-linear-gradient(#111 0,#111 1px,transparent 1px,transparent 2px)}
.lbtn{height:20px;flex:none;width:95px;background:#efefef;color:#222;font-size:15px;line-height:20px;display:flex;justify-content:center;white-space:nowrap;overflow:hidden;margin-bottom:2px;border-bottom:0;box-shadow:0 1px 0 #000,0 2px 0 #000}
.lbtn.head{margin-bottom:0;border:1px solid #ddd;background:linear-gradient(#fff,#e8e8e8)}
.list{flex:none;height:621px;width:95px;margin:0;padding:0;list-style:none;background:#008080;overflow:hidden}
.list li{height:26px;display:flex;align-items:center;padding-left:7px;color:#fff;font-size:15.500px;white-space:nowrap;overflow:hidden}
.list svg{width:16px;height:18px;flex:none;margin-right:4px;fill:none;stroke:#222}

.main{flex:1;min-width:0;display:flex;flex-direction:column}
.work{flex:none;height:813px;display:flex;overflow:hidden}
.ltools{width:25px;margin-right:5px;flex:none;display:flex;flex-direction:column;gap:2px;height:808px;overflow:hidden}
.vt{background:#ececec;border:1px solid #2f2f2f;display:flex;flex-direction:column;align-items:center;flex:none;overflow:hidden;fill:none;stroke:#222;stroke-width:1;width:25px}
.vt.grow{flex:1}
.vt>.dots{width:100%;height:9px;margin:0;flex:none;background:#5c5c5c;position:relative}
.vt>svg{width:20px;height:21.900px;flex:none;display:block}
.vt>s{width:100%;height:5.500px;flex:none;position:relative}
.vt>s::after{content:"";display:block;height:1px;background:#aaa;margin:2px 2px 0}
.vtx{height:21.900px;flex:none;font:normal bold 9.500px/22px "Liberation Mono",monospace;letter-spacing:-.2px;color:#111}
.bl2{color:#1010d0}
.center{width:1698px;flex:none;display:flex;flex-direction:column;height:807px;overflow:hidden;background:#d8d8d8}
.draw{width:1696px;height:786px;display:block;background:#000;flex:none;margin-top:2px;shape-rendering:crispEdges}
.yl path{fill:none;stroke:#ff0;stroke-width:3}
.yl2 path{fill:none;stroke:#ff0;stroke-width:.82}
.wh path{fill:none;stroke:#fff;stroke-width:3}
.wh path.tk{stroke-width:9}
.wh path.tk2{stroke-width:10}
.wh use{fill:none;stroke:#fff;stroke-width:3}
.g1{fill:none;stroke:#0f0;stroke-width:15}
.g2{fill:none;stroke:#0f0;stroke-width:18}
.g3{fill:none;stroke:#0f0;stroke-width:20}
.gn{fill:none;stroke:#0f0;stroke-width:40;stroke-linecap:round}
.gf{fill:#0f0}
.gr{shape-rendering:auto}
.gt{fill:#0a7a0a;font:15px "Liberation Mono",monospace;text-anchor:middle}
.trs{fill:none;stroke:#fff;stroke-width:3}
.mt{fill:#fff;font-size:16px;text-anchor:middle;font-weight:700}
.ucs path{fill:none;stroke:#fff;stroke-width:1}
.ax{fill:#fff;font:100 23px Roboto,"Liberation Sans",sans-serif;text-anchor:middle}

.tabbar{height:19px;flex:none;display:flex;background:#efefef;border-right:2px solid #bbb;font-size:15px;color:#222}
.navs{display:flex;width:76px;flex:none}
.navs svg{width:19px;height:19px;padding:2px 3px;border-right:1px solid #999;fill:#777;stroke:#333}
.mtab{width:54px;text-align:center;line-height:19px;flex:none}
.mtab.act{background:#000;color:#fff;clip-path:polygon(0 0,92% 0,100% 100%,8% 100%);width:52px}
.mtab:not(.act){border-right:1px solid #777;border-bottom:1px solid #777}

.rtools{flex:1;display:flex;gap:4px;padding-left:5px}
.rcol{display:flex;flex-direction:column;gap:2px;width:24px;flex:none}
.vt.r{width:24px}
.bigA2{height:30px;font:normal 24px/28px "Liberation Sans",sans-serif;color:#333;flex:none}

/* command */
.cmd{flex:none;height:58px;display:flex}
.cgrip{width:16px;flex:none;background:#aaa}
.clines{flex:1;display:flex;flex-direction:column;background:#fff}
.cl1{height:36px;display:flex;flex:none;border-bottom:1px solid #aaa}
.cl2{flex:1;display:flex;min-height:0}
.ctext{flex:1;overflow:hidden;white-space:pre;font-size:16px;line-height:18px;color:#1a1a1a;padding:0 0 0 1px;letter-spacing:1px;font-family:"Noto Sans CJK SC",sans-serif}
.wide{display:inline-block;transform:scaleX(1.2);transform-origin:0 50%}
.lat{font:14px "Liberation Mono",monospace;letter-spacing:-.4px}
.lat.sp{letter-spacing:-1.800px}
.vs{width:20px;background:#f0f0f0;display:flex;flex-direction:column;align-items:center;justify-content:space-between;padding:8px 0;flex:none}
.vs svg{width:11px;height:8px;fill:none;stroke:#555;stroke-width:1.5}
.hs{width:86px;background:#f0f0f0;display:flex;align-items:center;padding:0 8px;flex:none;justify-content:space-between}
.hs svg{width:8px;height:12px;fill:none;stroke:#555;stroke-width:1.5}
.thumb{display:block;width:16px;height:100%;background:#ccc;margin-right:16px}

/* status */
.status{height:22px;flex:none;display:flex;border-top:1px solid #000;background:linear-gradient(#8e8e8e,#6c6c6c)}
.coords{width:218px;flex:none;padding-left:11px;font:10px/21px "Liberation Mono",monospace;color:#1d1d1d;white-space:nowrap}
.tg{width:21.900px;flex:none;display:flex;align-items:center;justify-content:center;background:linear-gradient(#bcbcbc,#9a9a9a);border-right:1px solid #666;fill:none;stroke:#222;stroke-width:1}
.tg svg{width:16px;height:16px}
.tg.on{background:linear-gradient(#bfe6f2,#98d2e6)}
.tg.dk{background:#777}
.wf{fill:#fff}.or{fill:#f09020;stroke:#c06010}.ck{stroke:#20a020;stroke-width:2}.gy2{stroke:#777}
.mdl{width:30px;font-size:13.500px;color:#111;white-space:nowrap;overflow:hidden}
.gap18{margin-right:18px}.gap19{margin-right:19px}.gap5{margin-right:5px}
.anno{width:54px;gap:2px;font:12px "Liberation Mono",monospace;color:#111}
.tri{display:block;width:0;height:0;border:4px solid transparent;border-top:5px solid #111;border-bottom:0}
.w26{width:25.700px}.w10{width:10px}.w19{width:19px;margin-right:5px}

/* taskbar */
.taskbar{height:50px;flex:none;display:flex;align-items:center;position:relative;background:linear-gradient(90deg,#1d0b0d 0,#2d0e12 28%,#221010 55%,#16120a 63%,#132009 70%,#1c2410 78%,#3c1d18 88%,#3d1a18 100%);color:#fff}
.ti{width:30px;height:30px;flex:none;fill:none}
.win{width:20px;height:20px;margin:0 40px 0 20px;fill:#fff}
.ring{width:20px;height:20px;stroke:#ddd;stroke-width:3;margin-right:40px}
.tv{width:20px;height:20px;stroke:#fff;stroke-width:1.200;margin-right:38px}
.store{margin-right:32px}
.bird{margin-right:23px}
.mailb{margin-right:17px}
.tw{fill:#fff}
.bag{fill:none;stroke:#fff;stroke-width:1.600}
.r1c{fill:#e04020}.g1c{fill:#50b030}.b1c{fill:#10a0e8}.y1c{fill:#f8b800}
.fea{fill:#e8f2fc}.feb{fill:#2a78e8}
.edge{margin-right:21px;width:51px;height:50px;padding:9px 10.500px;border-bottom:3px solid #f4b070}
.edge svg,.acad svg{display:block;width:30px;height:30px}
.edg{fill:#0a78d8}
.mail{fill:none;stroke:#111;stroke-width:2}
.acad{width:61px;height:50px;padding:9px 15px;background:#4a3633;border-bottom:3px solid #f4b070}
.pg{fill:#eee}
.tray{display:flex;align-items:center;gap:10px;margin-right:5px}
.tray>svg{width:20px;height:20px;fill:none;stroke:#fff;flex:none}
.tray>svg.ppl{margin-right:14px}
.nv{fill:#2a2e30;stroke:none}.nv2{fill:#6a9a1a;stroke:none}
.ck2{fill:#eee;stroke:#999}.ck3{fill:#ddd;stroke:#aaa}.ck4{stroke:#2080e0;stroke-width:2}
.cp{fill:#888;stroke:#ddd}.cp2{fill:#ccc;stroke:#333}
.qk{fill:#111;stroke:none}.qr{fill:#d02020;stroke:none}.qy{stroke:#f0a010;stroke-width:2}
.gy3{fill:#999;stroke:#ccc}.ck5{stroke:#50d030;stroke-width:3;fill:none}
.bt{fill:#1080f0;stroke:none}.btw{stroke:#fff;fill:none;stroke-width:1.100}
.sq1{fill:#2078c0;stroke:#80b0e0}.sq2{fill:#1a90f8;stroke:none}.sq3{fill:#b010d8;stroke:#e01080}
.sh{stroke:#111}.wn{fill:#f8c800;stroke:none}.tl{stroke:#eee;fill:none}
.ime{font-size:16px;width:20px;text-align:center;line-height:20px}
.clock{width:90px;flex:none;display:flex;flex-direction:column;align-items:center;font-size:16px;line-height:24px;color:#eee}
.notif{width:20px;height:20px;margin:0 32px 0 16px;fill:none;stroke:#fff;stroke-width:1.100;flex:none}
```
